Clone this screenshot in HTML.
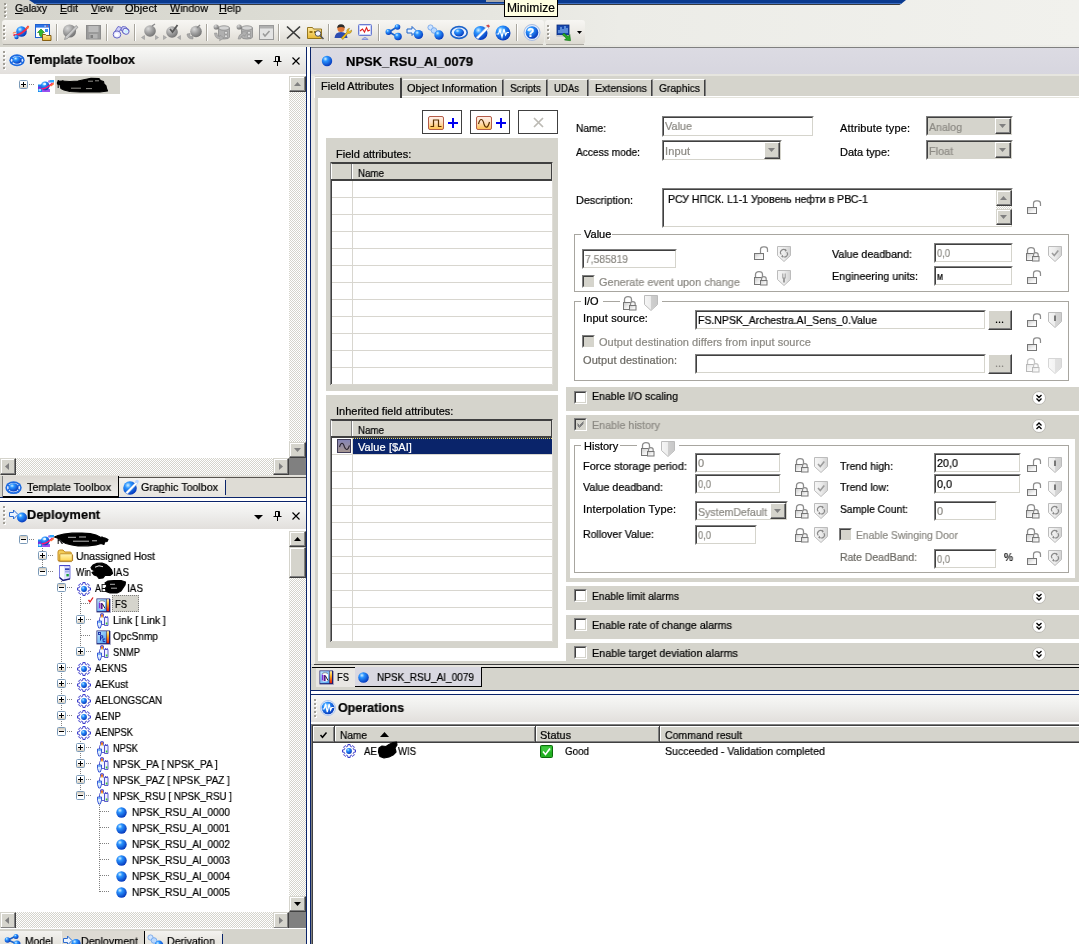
<!DOCTYPE html>
<html><head><meta charset="utf-8"><title>ArchestrA IDE</title>
<style>
html,body{margin:0;padding:0}
body{width:1079px;height:944px;overflow:hidden;position:relative;background:#d5d4cc;font-family:"Liberation Sans",sans-serif;font-size:11px;line-height:13px;color:#000}
.a{position:absolute;box-sizing:border-box}
.t{position:absolute;white-space:nowrap;line-height:13px}
svg{overflow:visible}
.hatch{background-color:#fff;background-image:linear-gradient(45deg,#d5d4cc 25%,transparent 25%,transparent 75%,#d5d4cc 75%),linear-gradient(45deg,#d5d4cc 25%,transparent 25%,transparent 75%,#d5d4cc 75%);background-size:2px 2px;background-position:0 0,1px 1px}
.btn3d{background:#d5d4cc;border:1px solid;border-color:#fff #404040 #404040 #fff;box-shadow:inset -1px -1px 0 #808080,inset 1px 1px 0 #d5d4cc}
.sunk{border:1px solid;border-color:#808080 #fff #fff #808080;box-shadow:inset 1px 1px 0 #404040,inset -1px -1px 0 #d5d4cc;background:#fff}
u{text-decoration:underline}

#root{position:absolute;left:0;top:0;width:1079px;height:944px;overflow:hidden}
.t{will-change:transform;-webkit-text-stroke:0.22px}
.sbtn{background:#d5d4cc;border:1px solid;border-color:#d5d4cc #404040 #404040 #d5d4cc;box-shadow:inset -1px -1px 0 #808080,inset 1px 1px 0 #fff}

</style></head>
<body>
<div id="root">
<svg width="0" height="0" style="position:absolute"><defs>
<radialGradient id="gBlue" cx="35%" cy="30%" r="75%"><stop offset="0" stop-color="#d4f2ff"/><stop offset="0.3" stop-color="#2a94ff"/><stop offset="1" stop-color="#0434b8"/></radialGradient>
<radialGradient id="gGray" cx="35%" cy="30%" r="75%"><stop offset="0" stop-color="#d8d8d8"/><stop offset="0.5" stop-color="#a0a0a0"/><stop offset="1" stop-color="#707070"/></radialGradient>
<linearGradient id="gFold" x1="0" y1="0" x2="0" y2="1"><stop offset="0" stop-color="#ffe9a0"/><stop offset="1" stop-color="#e8b830"/></linearGradient>
<linearGradient id="gOr" x1="0" y1="0" x2="0" y2="1"><stop offset="0" stop-color="#fff0ea"/><stop offset="0.45" stop-color="#ffe0c0"/><stop offset="1" stop-color="#ffc048"/></linearGradient>
<linearGradient id="gIcoB" x1="0" y1="0" x2="1" y2="1"><stop offset="0" stop-color="#c0e4ff"/><stop offset="1" stop-color="#4aa0f0"/></linearGradient>
<linearGradient id="gIcoR" x1="0" y1="0" x2="0" y2="1"><stop offset="0" stop-color="#fff0a0"/><stop offset="0.4" stop-color="#ffb020"/><stop offset="1" stop-color="#e01808"/></linearGradient>
<linearGradient id="gLk" x1="0" y1="0" x2="1" y2="1"><stop offset="0" stop-color="#c8c8c8"/><stop offset="0.6" stop-color="#f4f4f4"/><stop offset="1" stop-color="#fff"/></linearGradient>
<linearGradient id="gSh" x1="0" y1="0" x2="1" y2="0"><stop offset="0" stop-color="#f6f6f6"/><stop offset="0.5" stop-color="#ececec"/><stop offset="1" stop-color="#d2d2d2"/></linearGradient>
<linearGradient id="gFold2" x1="0" y1="0" x2="0" y2="1"><stop offset="0" stop-color="#fff6b8"/><stop offset="1" stop-color="#ffd450"/></linearGradient>
<linearGradient id="gPur" x1="0" y1="0" x2="0" y2="1"><stop offset="0" stop-color="#8484b8"/><stop offset="1" stop-color="#a89890"/></linearGradient>
</defs></svg>
<div class="a" style="left:0px;top:0px;width:1079px;height:47px;background:linear-gradient(90deg,#d5d4cc 0,#dbdbd3 250px,#ecece7 620px,#f1f1ed 1079px)"></div>
<div class="a" style="left:3px;top:44px;width:540px;height:1px;background:#adaba4"></div>
<div class="a" style="left:546px;top:44px;width:38px;height:1px;background:#adaba4"></div>
<div class="a" style="left:0px;top:45px;width:1079px;height:2px;background:linear-gradient(90deg,#d6d5cd 0,#dadad2 250px,#e7e7e1 620px,#ecece7 1079px)"></div>
<svg class="a" style="left:0px;top:0px" width="1079" height="6" viewBox="0 0 1079 6"><polygon points="29,0 906,0 901,3.9 35,3.9" fill="#0a3a8f"/><polygon points="34,3.1 902,3.1 901,4.1 35.5,4.1" fill="#3f6fc0"/><polygon points="35.5,4 901,4 899.5,5 37,5" fill="#3a3a3a"/></svg>
<div class="a" style="left:486px;top:0px;width:18px;height:2px;background:#a8a8a8"></div>
<div class="a" style="left:4px;top:3px;width:2px;height:2px;background:#9c9a92"></div>
<div class="a" style="left:5px;top:4px;width:2px;height:2px;background:#fff"></div>
<div class="a" style="left:4px;top:3px;width:2px;height:2px;background:#9c9a92"></div>
<div class="a" style="left:4px;top:7px;width:2px;height:2px;background:#9c9a92"></div>
<div class="a" style="left:5px;top:8px;width:2px;height:2px;background:#fff"></div>
<div class="a" style="left:4px;top:7px;width:2px;height:2px;background:#9c9a92"></div>
<div class="a" style="left:4px;top:11px;width:2px;height:2px;background:#9c9a92"></div>
<div class="a" style="left:5px;top:12px;width:2px;height:2px;background:#fff"></div>
<div class="a" style="left:4px;top:11px;width:2px;height:2px;background:#9c9a92"></div>
<div class="a" style="left:4px;top:15px;width:2px;height:2px;background:#9c9a92"></div>
<div class="a" style="left:5px;top:16px;width:2px;height:2px;background:#fff"></div>
<div class="a" style="left:4px;top:15px;width:2px;height:2px;background:#9c9a92"></div>
<span class="t" style="left:15px;top:2px;transform:scaleX(0.9343);transform-origin:0 0;"><u>G</u>alaxy</span>
<span class="t" style="left:60px;top:2px;transform:scaleX(0.9489);transform-origin:0 0;"><u>E</u>dit</span>
<span class="t" style="left:91px;top:2px;transform:scaleX(0.9306);transform-origin:0 0;"><u>V</u>iew</span>
<span class="t" style="left:125px;top:2px;letter-spacing:0.04px;"><u>O</u>bject</span>
<span class="t" style="left:170px;top:2px;transform:scaleX(0.9712);transform-origin:0 0;"><u>W</u>indow</span>
<span class="t" style="left:219px;top:2px;transform:scaleX(0.9724);transform-origin:0 0;"><u>H</u>elp</span>
<div class="a" style="left:504px;top:-1px;width:54px;height:18px;background:#ffffe1;border:1px solid #000"></div>
<span class="t" style="left:507px;top:1px;font-size:12px;line-height:14px;letter-spacing:0.09px;">Minimize</span>
<div class="a" style="left:2px;top:20px;width:542px;height:24px;background:linear-gradient(180deg,#f7f6f3 0,#eeece7 45%,#dcd9d1 100%);border-radius:3px 3px 3px 3px;"></div>
<div class="a" style="left:545px;top:20px;width:40px;height:24px;background:linear-gradient(180deg,#f7f6f3 0,#eeece7 45%,#dcd9d1 100%);border-radius:3px 3px 3px 3px;"></div>
<div class="a" style="left:4px;top:26px;width:2px;height:2px;background:#fff"></div>
<div class="a" style="left:3px;top:25px;width:2px;height:2px;background:#a09d95"></div>
<div class="a" style="left:4px;top:30px;width:2px;height:2px;background:#fff"></div>
<div class="a" style="left:3px;top:29px;width:2px;height:2px;background:#a09d95"></div>
<div class="a" style="left:4px;top:34px;width:2px;height:2px;background:#fff"></div>
<div class="a" style="left:3px;top:33px;width:2px;height:2px;background:#a09d95"></div>
<div class="a" style="left:4px;top:38px;width:2px;height:2px;background:#fff"></div>
<div class="a" style="left:3px;top:37px;width:2px;height:2px;background:#a09d95"></div>
<div class="a" style="left:548px;top:26px;width:2px;height:2px;background:#fff"></div>
<div class="a" style="left:547px;top:25px;width:2px;height:2px;background:#a09d95"></div>
<div class="a" style="left:548px;top:30px;width:2px;height:2px;background:#fff"></div>
<div class="a" style="left:547px;top:29px;width:2px;height:2px;background:#a09d95"></div>
<div class="a" style="left:548px;top:34px;width:2px;height:2px;background:#fff"></div>
<div class="a" style="left:547px;top:33px;width:2px;height:2px;background:#a09d95"></div>
<div class="a" style="left:548px;top:38px;width:2px;height:2px;background:#fff"></div>
<div class="a" style="left:547px;top:37px;width:2px;height:2px;background:#a09d95"></div>
<div class="a" style="left:56px;top:24px;width:1px;height:17px;background:#a8a59d"></div>
<div class="a" style="left:57px;top:24px;width:1px;height:17px;background:#fff"></div>
<div class="a" style="left:106px;top:24px;width:1px;height:17px;background:#a8a59d"></div>
<div class="a" style="left:107px;top:24px;width:1px;height:17px;background:#fff"></div>
<div class="a" style="left:134px;top:24px;width:1px;height:17px;background:#a8a59d"></div>
<div class="a" style="left:135px;top:24px;width:1px;height:17px;background:#fff"></div>
<div class="a" style="left:206px;top:24px;width:1px;height:17px;background:#a8a59d"></div>
<div class="a" style="left:207px;top:24px;width:1px;height:17px;background:#fff"></div>
<div class="a" style="left:278px;top:24px;width:1px;height:17px;background:#a8a59d"></div>
<div class="a" style="left:279px;top:24px;width:1px;height:17px;background:#fff"></div>
<div class="a" style="left:328px;top:24px;width:1px;height:17px;background:#a8a59d"></div>
<div class="a" style="left:329px;top:24px;width:1px;height:17px;background:#fff"></div>
<div class="a" style="left:378px;top:24px;width:1px;height:17px;background:#a8a59d"></div>
<div class="a" style="left:379px;top:24px;width:1px;height:17px;background:#fff"></div>
<div class="a" style="left:516px;top:24px;width:1px;height:17px;background:#a8a59d"></div>
<div class="a" style="left:517px;top:24px;width:1px;height:17px;background:#fff"></div>
<svg class="a" style="left:12px;top:24px" width="18" height="16" viewBox="0 0 18 16"><circle cx="9.5" cy="7.5" r="5.3" fill="url(#gBlue)"/><path d="M1.500,11 C6,12 13,8 16.500,2" stroke="#f02850" stroke-width="1.800" fill="none"/><path d="M13,5 L17,1.500 L16.500,4.500z" fill="#ff7030"/><path d="M4.800,9.300 A5.300,5.300 0 0 1 14.300,5.200" stroke="url(#gBlue)" stroke-width="0" fill="none"/><circle cx="4.500" cy="13" r="2.200" fill="url(#gBlue)"/><path d="M1,9.500 q1,-1.500 3,-1" stroke="#ff9060" stroke-width="1.200" fill="none"/></svg>
<svg class="a" style="left:35px;top:24px" width="17" height="17" viewBox="0 0 17 17"><rect x="0.500" y="0.500" width="14" height="13" fill="#fff" stroke="#2060d0"/><rect x="1" y="1" width="13" height="2.600" fill="#2c74e8"/><rect x="9.500" y="1.500" width="1.200" height="1.200" fill="#fff"/><rect x="11.700" y="1.500" width="1.200" height="1.200" fill="#ff5030"/><rect x="10" y="5" width="3" height="3" fill="#3c8cf0"/><path d="M2.500,8.500 l3.500,-3.500 l3.500,3.500 h-2 q0,3.500 2,4 h-4 q-1.500,-1 -1,-4z" fill="#30b830" stroke="#0c7a0c" stroke-width=".6"/><path d="M7.500,10.500 h3 l1,1 h4.500 v5 h-8.500z" fill="url(#gFold)" stroke="#7a5408" stroke-width=".9"/></svg>
<svg class="a" style="left:62px;top:24px" width="18" height="17" viewBox="0 0 18 17"><circle cx="7.5" cy="7" r="6.6" fill="url(#gGray)"/><path d="M2.500,15.500 L3.500,12.500 L14,1.500 l2,1.700 L5.500,14.500z" fill="#c8c8c8" stroke="#8a8a8a" stroke-width=".7"/></svg>
<svg class="a" style="left:86px;top:25px" width="15" height="15" viewBox="0 0 15 15"><rect x="0.500" y="0.500" width="14" height="13.500" fill="#9a9a9a" stroke="#8c8c8c"/><rect x="2.500" y="1" width="10" height="6" fill="#bcbcbc"/><rect x="3.500" y="9" width="8" height="4.500" fill="#b4b4b4"/><rect x="4.500" y="10" width="2.500" height="3" fill="#808080"/></svg>
<svg class="a" style="left:112px;top:25px" width="18" height="14" viewBox="0 0 18 14"><path d="M2,8 L6,1.500 L9.500,2.500 L8,6 Z" fill="#d0d0f8" stroke="#6464c4" stroke-width=".9"/><path d="M9,5 L10.500,1.500 L14,2 L16.500,5.500 L12,8.500 Z" fill="#d8d8fc" stroke="#6464c4" stroke-width=".9"/><ellipse cx="5" cy="9.500" rx="3.800" ry="3.600" fill="#e8e8ff" stroke="#6464c4" stroke-width="1"/><ellipse cx="13.800" cy="6.300" rx="3.200" ry="2.800" fill="#e8f0ff" stroke="#6464c4" stroke-width="1" transform="rotate(25 13.800 6.300)"/><ellipse cx="4.800" cy="9.800" rx="1.800" ry="1.700" fill="#fff"/><ellipse cx="14.200" cy="6.500" rx="1.500" ry="1.300" fill="#c8f0ff"/></svg>
<svg class="a" style="left:141px;top:24px" width="18" height="17" viewBox="0 0 18 17"><circle cx="9" cy="7" r="5.8" fill="url(#gGray)"/><path d="M11,2 l3,-2" stroke="#888" stroke-width="1.4"/><path d="M0.5,13.5 l3,-2 v4z M17.5,13.5 l-3,-2 v4z" fill="#b0b0b0" stroke="#909090" stroke-width=".5"/></svg>
<svg class="a" style="left:163px;top:24px" width="18" height="17" viewBox="0 0 18 17"><circle cx="9" cy="8" r="5.8" fill="url(#gGray)"/><path d="M7,5 l2.5,3 l5,-7" stroke="#585858" stroke-width="1.8" fill="none"/><path d="M3.5,13.5 l-3,-2 v4z M14.500,13.5 l3,-2 v4z" fill="#b0b0b0" stroke="#909090" stroke-width=".5"/></svg>
<svg class="a" style="left:186px;top:24px" width="18" height="17" viewBox="0 0 18 17"><circle cx="10" cy="7.5" r="5.8" fill="url(#gGray)"/><path d="M14,1 l-3,3" stroke="#888" stroke-width="1.4"/><path d="M1,10 q0,5 6,5 l0,-2.5 l-2.5,0 q-1,-1 -0.5,-3z" fill="#a8a8a8" stroke="#888" stroke-width=".5"/></svg>
<svg class="a" style="left:213px;top:24px" width="18" height="17" viewBox="0 0 18 17"><path d="M5.500,4 v9 q0,2 5.500,2 q5.500,0 5.500,-2 v-9z" fill="#b0b0b0" stroke="#8a8a8a" stroke-width=".8"/><ellipse cx="11" cy="4" rx="5.500" ry="2.200" fill="#d4d4d4" stroke="#8a8a8a" stroke-width=".8"/><path d="M11.500,7.500 h3 v2.500 h-3z M11.500,11 h3 v2.500 h-3z" fill="#dcdcdc" stroke="#8a8a8a" stroke-width=".6"/><circle cx="3.200" cy="3" r="2.600" fill="url(#gGray)"/><path d="M1.500,9 q0,5.500 5.500,6 l-0.500,1.800 l4.500,-2.800 l-4,-3 l-0.300,1.800 q-2.800,-0.500 -2.800,-3.800z" fill="#b0b0b0" stroke="#8c8c8c" stroke-width=".5"/></svg>
<svg class="a" style="left:236px;top:24px" width="18" height="17" viewBox="0 0 18 17"><path d="M5.500,4 v9 q0,2 5.500,2 q5.500,0 5.500,-2 v-9z" fill="#b0b0b0" stroke="#8a8a8a" stroke-width=".8"/><ellipse cx="11" cy="4" rx="5.500" ry="2.200" fill="#d4d4d4" stroke="#8a8a8a" stroke-width=".8"/><path d="M11.500,7.500 h3 v2.500 h-3z M11.500,11 h3 v2.500 h-3z" fill="#dcdcdc" stroke="#8a8a8a" stroke-width=".6"/><circle cx="3.200" cy="3" r="2.600" fill="url(#gGray)"/><path d="M2,15 q0.500,-5 5,-6 l-0.800,-1.600 l5,0.800 l-2.500,4.200 l-0.700,-1.500 q-3,1 -3.500,4.100z" fill="#b0b0b0" stroke="#8c8c8c" stroke-width=".5"/></svg>
<svg class="a" style="left:259px;top:25px" width="14" height="14" viewBox="0 0 14 14"><rect x="0.5" y="0.5" width="14" height="14" fill="#e4e4e4" stroke="#9a9a9a"/><rect x="1" y="1" width="13" height="2.5" fill="#b0b0b0"/><path d="M4,8.5 l2,2.500 l4.500,-5" stroke="#9a9a9a" stroke-width="1.5" fill="none"/></svg>
<svg class="a" style="left:286px;top:26px" width="15" height="13" viewBox="0 0 15 13"><path d="M1,0.5 L14,12.5 M14,0.5 L1,12.5" stroke="#3a3a3a" stroke-width="1.7"/></svg>
<svg class="a" style="left:307px;top:25px" width="18" height="15" viewBox="0 0 18 15"><path d="M0.5,2.5 h5 l1,1.500 h8 v9.500 h-14z" fill="url(#gFold)" stroke="#8a6a10" stroke-width=".9"/><rect x="2.5" y="6" width="3" height="2" fill="#9a7410"/><rect x="7" y="6" width="3" height="2" fill="#9a7410"/><circle cx="11" cy="8.500" r="2.800" fill="#f4f4ff" stroke="#555" stroke-width="1"/><path d="M13,10.500 l3.500,3.500" stroke="#555" stroke-width="1.600"/></svg>
<svg class="a" style="left:334px;top:24px" width="19" height="17" viewBox="0 0 19 17"><circle cx="7" cy="4.500" r="3.600" fill="#e07838"/><path d="M3.200,4 a3.800,3.800 0 0 1 7.600,0 q-3.500,-2 -7.600,0z" fill="#2a2a2a"/><path d="M0.500,14 q0.500,-6 6.500,-6 q6,0 6.500,6z" fill="#2c4cb0"/><path d="M17.500,6 a2.600,2.600 0 0 1 -3.500,3.200 L9,15.500 l-1.800,-1.500 L13,8 a2.600,2.600 0 0 1 2.600,-3.600 l-1.200,1.800 l1.400,1.200z" fill="#f0c020" stroke="#8a6a10" stroke-width=".5"/></svg>
<svg class="a" style="left:357px;top:24px" width="17" height="17" viewBox="0 0 17 17"><rect x="1.500" y="0.500" width="13" height="11" rx="1" fill="#c8d4f8" stroke="#6a7ad0"/><rect x="3" y="2" width="10" height="8" fill="#fff"/><path d="M3,7 l2.500,-2 l2,3 l2,-4.500 l1.500,3.500 l2,-1" stroke="#e02020" stroke-width="1.100" fill="none"/><path d="M5,15.500 q3,-4 6,0z" fill="#b8c4f0" stroke="#6a7ad0" stroke-width=".7"/></svg>
<svg class="a" style="left:385px;top:24px" width="18" height="17" viewBox="0 0 18 17"><path d="M4,8 L12,3 M4,8 L13,13" stroke="#1c62c8" stroke-width="1.800"/><circle cx="3.5" cy="8" r="3" fill="url(#gBlue)"/><circle cx="12.5" cy="3" r="2.8" fill="url(#gBlue)"/><circle cx="13" cy="12.5" r="3.8" fill="url(#gBlue)"/></svg>
<svg class="a" style="left:406px;top:25px" width="18" height="15" viewBox="0 0 18 15"><path d="M1,4 h5 v-2.500 l4.500,4.500 l-4.500,4.500 v-2.500 h-5z" fill="#e8f2ff" stroke="#1c62c8" stroke-width="1"/><circle cx="12.5" cy="9.5" r="4.6" fill="url(#gBlue)"/></svg>
<svg class="a" style="left:427px;top:24px" width="18" height="17" viewBox="0 0 18 17"><circle cx="3.500" cy="3.500" r="2.600" fill="#cfe4ff" stroke="#6aa0e8" stroke-width=".8"/><circle cx="7" cy="6.500" r="2.800" fill="#b8d8ff" stroke="#6aa0e8" stroke-width=".8"/><circle cx="12" cy="11" r="4.7" fill="url(#gBlue)"/></svg>
<svg class="a" style="left:449px;top:25px" width="20" height="15" viewBox="0 0 20 15"><ellipse cx="10" cy="7.500" rx="9" ry="6.800" fill="#1c62c8"/><ellipse cx="10" cy="7.500" rx="7.400" ry="5" fill="#e8f0ff"/><ellipse cx="10" cy="7.500" rx="5" ry="4" fill="url(#gBlue)"/></svg>
<svg class="a" style="left:472px;top:24px" width="19" height="17" viewBox="0 0 19 17"><circle cx="8.5" cy="9" r="7" fill="url(#gBlue)"/><path d="M4,13.500 L15,2.500 l1.800,1.800 L6,15z" fill="#fff" stroke="#8ab0e8" stroke-width=".6"/><path d="M14,1.500 l2.500,-1 l1.500,1.800 l-1.500,1.500z" fill="#d04848"/></svg>
<svg class="a" style="left:494px;top:24px" width="18" height="17" viewBox="0 0 18 17"><circle cx="9" cy="9" r="7.5" fill="url(#gBlue)"/><path d="M2.500,10 l2,-0 l1.500,-4 l2,7 l2,-8 l1.500,6 l1.500,-2.500 h2" stroke="#fff" stroke-width="1.200" fill="none"/></svg>
<svg class="a" style="left:523px;top:24px" width="18" height="17" viewBox="0 0 18 17"><circle cx="9" cy="8.500" r="8" fill="#e4ecfa" stroke="#a8bce0" stroke-width="1"/><circle cx="9" cy="8.5" r="6.3" fill="url(#gBlue)"/></svg>
<span class="t" style="left:526.5px;top:26px;font-size:12px;line-height:14px;font-weight:bold;color:#fff;">?</span>
<svg class="a" style="left:556px;top:24px" width="19" height="18" viewBox="0 0 19 18"><rect x="1" y="1" width="12" height="10" fill="#1848b0" stroke="#0c2a78" stroke-width=".8"/><path d="M3,9 v-3 M5,9 v-6 M7,9 v-4 M9,9 v-7 M11,9 v-5" stroke="#9cd0ff" stroke-width="1"/><rect x="0.500" y="11" width="13" height="1.800" fill="#c8c8c8"/><path d="M8,9 l4,3.500 l1.800,-1.800 l0.700,6 l-6,-0.700 l1.800,-1.800 l-4,-3.500z" fill="#28a828" stroke="#0c6a0c" stroke-width=".6"/></svg>
<svg class="a" style="left:577px;top:31px" width="5" height="3" viewBox="0 0 5 3"><path d="M0,0 h5 l-2.500,3z" fill="#000"/></svg>
<div class="a" style="left:0px;top:47px;width:306px;height:27px;background:linear-gradient(180deg,#f8f8f6 0,#efefed 40%,#e2dfdc 100%);"></div>
<div class="a" style="left:4px;top:52px;width:2px;height:2px;background:#fff"></div>
<div class="a" style="left:3px;top:51px;width:2px;height:2px;background:#a29f97"></div>
<div class="a" style="left:4px;top:56px;width:2px;height:2px;background:#fff"></div>
<div class="a" style="left:3px;top:55px;width:2px;height:2px;background:#a29f97"></div>
<div class="a" style="left:4px;top:60px;width:2px;height:2px;background:#fff"></div>
<div class="a" style="left:3px;top:59px;width:2px;height:2px;background:#a29f97"></div>
<div class="a" style="left:4px;top:64px;width:2px;height:2px;background:#fff"></div>
<div class="a" style="left:3px;top:63px;width:2px;height:2px;background:#a29f97"></div>
<div class="a" style="left:4px;top:68px;width:2px;height:2px;background:#fff"></div>
<div class="a" style="left:3px;top:67px;width:2px;height:2px;background:#a29f97"></div>
<svg class="a" style="left:9px;top:54px" width="16.02" height="12.46" viewBox="0 0 18 14"><ellipse cx="9" cy="7" rx="8.600" ry="6.700" fill="#1c6ae0"/><ellipse cx="9" cy="7" rx="7" ry="4.800" fill="#dfeaff"/><ellipse cx="9" cy="6.800" rx="5.200" ry="4.300" fill="url(#gBlue)"/><path d="M2,3.500 l2.500,2 M16,3.500 l-2.500,2 M2,10.500 l2.500,-2 M16,10.500 l-2.500,-2" stroke="#1c6ae0" stroke-width="1.600"/></svg>
<span class="t" style="left:27px;top:52px;font-size:13px;line-height:15px;font-weight:bold;transform:scaleX(0.9883);transform-origin:0 0;">Template Toolbox</span>
<svg class="a" style="left:254px;top:60px" width="9" height="5" viewBox="0 0 9 5"><path d="M0,0 h9 l-4.5,4.5z" fill="#000"/></svg>
<svg class="a" style="left:273px;top:56px" width="9" height="10" viewBox="0 0 9 10"><path d="M2.500,0.500 h4 v4.500 M2.500,0.500 v4.500 M5.500,0.500 v4.500 M0.500,5.500 h8 M4.500,5.500 v4.500" stroke="#000" stroke-width="1" fill="none"/></svg>
<svg class="a" style="left:292px;top:57px" width="9" height="8" viewBox="0 0 9 8"><path d="M0.500,0.500 L7.500,7.500 M7.500,0.500 L0.500,7.500" stroke="#000" stroke-width="1.150"/></svg>
<div class="a" style="left:0px;top:74px;width:306px;height:384px;background:#fff"></div>
<div class="a" style="left:19px;top:80px;width:9px;height:9px;border:1px solid #7b9ab8;background:linear-gradient(180deg,#fff 0,#fff 40%,#d6cebf 100%);border-radius:1.5px"></div>
<div class="a" style="left:21px;top:84px;width:5px;height:1px;background:#000"></div>
<div class="a" style="left:23px;top:82px;width:1px;height:5px;background:#000"></div>
<div class="a" style="left:29px;top:84px;width:5px;height:1px;background-image:linear-gradient(90deg,#808080 50%,transparent 50%);background-size:2px 1px"></div>
<svg class="a" style="left:38px;top:80px" width="16" height="12" viewBox="0 0 16 12"><rect x="0" y="4.500" width="4" height="7.500" fill="#1488f0"/><rect x="0" y="6.500" width="3" height="2.500" fill="#7030e0"/><circle cx="1.800" cy="10" r="1.300" fill="#a8e0ff"/><rect x="11.500" y="0" width="4.500" height="2.500" fill="#30a8ff"/><rect x="10" y="0.500" width="2" height="2" fill="#8a50f0" opacity=".7"/><rect x="4" y="9" width="8" height="3" fill="#9a50f0"/><circle cx="7.200" cy="5.800" r="4.400" fill="url(#gBlue)"/><circle cx="6.800" cy="4" r="1.300" fill="#e8f8ff"/><path d="M3.500,8.800 C7,9 11,6.500 14.500,3" stroke="#ff1478" stroke-width="1.500" fill="none"/><path d="M12,5.500 L15.800,2 L15.800,4.500 L13,6.500z" fill="#ff7038"/></svg>
<div class="a" style="left:55px;top:76px;width:65px;height:18px;background:#d5d4cc"></div>
<span class="t" style="left:57px;top:78px;transform:scaleX(0.8819);transform-origin:0 0;">N</span>
<svg class="a" style="left:0;top:0" width="1079" height="944" viewBox="0 0 1079 944"><path d="M57.5,82 L61,81 L70,81.5 L78,81 L85,79.5 L91,78.3 L99,78.5 L100.5,80.5 L103.5,81.5 L104,84 L106,86 L106.5,88.5 L107.5,91 L100,92 L80,92 L70,91.5 L64,90 L61,88.5 L60,84.5 L57.5,84 Z" fill="#000" stroke="#000" stroke-width="1.2" stroke-linejoin="round"/><path d="M71,88.2 h10 M86,88.6 h6 M95,80.8 h4 M88,81.2 h5" stroke="#b8b5ad" stroke-width=".8"/></svg>
<div class="a hatch" style="left:289px;top:76px;width:17px;height:382px"></div>
<div class="a sbtn" style="left:289px;top:76px;width:17px;height:16px"></div>
<svg class="a" style="left:294px;top:82px" width="7" height="4" viewBox="0 0 7 4"><path d="M0,4 h7 l-3.500,-4z" fill="#808080"/></svg>
<div class="a sbtn" style="left:289px;top:442px;width:17px;height:16px"></div>
<svg class="a" style="left:294px;top:448px" width="7" height="4" viewBox="0 0 7 4"><path d="M0,0 h7 l-3.500,4z" fill="#808080"/></svg>
<div class="a hatch" style="left:0px;top:458px;width:289px;height:17px"></div>
<div class="a sbtn" style="left:0px;top:458px;width:16px;height:17px"></div>
<svg class="a" style="left:5px;top:463px" width="4" height="7" viewBox="0 0 4 7"><path d="M4,0 v7 l-4,-3.500z" fill="#808080"/></svg>
<div class="a sbtn" style="left:273px;top:458px;width:16px;height:17px"></div>
<svg class="a" style="left:279px;top:463px" width="4" height="7" viewBox="0 0 4 7"><path d="M0,0 v7 l4,-3.500z" fill="#808080"/></svg>
<div class="a" style="left:289px;top:458px;width:17px;height:17px;background:#808080"></div>
<div class="a" style="left:0px;top:475px;width:306px;height:22px;background:#dedcd5"></div>
<div class="a" style="left:0px;top:475px;width:306px;height:1px;background:#e4e2dc"></div>
<div class="a" style="left:0px;top:477px;width:306px;height:1px;background:#55534e"></div>
<div class="a" style="left:0px;top:476px;width:3px;height:21px;background:#d5d4cc;border-right:1px solid #808080"></div>
<div class="a" style="left:3px;top:476px;width:116px;height:22px;background:linear-gradient(180deg,#dcd9d3,#efeeeb);border-right:1px solid #000;border-bottom:2px solid #000"></div>
<svg class="a" style="left:5px;top:481px" width="17.1" height="13.3" viewBox="0 0 18 14"><ellipse cx="9" cy="7" rx="8.600" ry="6.700" fill="#1c6ae0"/><ellipse cx="9" cy="7" rx="7" ry="4.800" fill="#dfeaff"/><ellipse cx="9" cy="6.800" rx="5.200" ry="4.300" fill="url(#gBlue)"/><path d="M2,3.500 l2.500,2 M16,3.500 l-2.500,2 M2,10.500 l2.500,-2 M16,10.500 l-2.500,-2" stroke="#1c6ae0" stroke-width="1.600"/></svg>
<span class="t" style="left:27px;top:481px;transform:scaleX(0.9830);transform-origin:0 0;"><u>T</u>emplate Toolbox</span>
<div class="a" style="left:119px;top:478px;width:106px;height:19px;background:linear-gradient(180deg,#f4f3f0,#e6e4de)"></div>
<svg class="a" style="left:122px;top:479px" width="17" height="17" viewBox="0 0 17 17"><circle cx="8" cy="9" r="6.8" fill="url(#gBlue)"/><path d="M3.500,13.500 L14,3 l1.600,1.600 L5.500,15z" fill="#fff" stroke="#8ab0e8" stroke-width=".5"/><circle cx="15" cy="2.500" r="1.800" fill="#bcd6ff"/></svg>
<span class="t" style="left:141px;top:481px;transform:scaleX(0.9707);transform-origin:0 0;">Gra<u>p</u>hic Toolbox</span>
<div class="a" style="left:225px;top:480px;width:1px;height:15px;background:#0a246a"></div>
<div class="a" style="left:0px;top:497px;width:306px;height:1px;background:#0a246a"></div>
<div class="a" style="left:3px;top:497px;width:116px;height:1px;background:#000"></div>
<div class="a" style="left:0px;top:498px;width:306px;height:3px;background:#fff"></div>
<div class="a" style="left:0px;top:501px;width:306px;height:1px;background:#0a246a"></div>
<div class="a" style="left:0px;top:502px;width:306px;height:1px;background:#fff"></div>
<div class="a" style="left:0px;top:503px;width:306px;height:26px;background:linear-gradient(180deg,#f8f8f6 0,#efefed 40%,#e2dfdc 100%);"></div>
<div class="a" style="left:4px;top:507px;width:2px;height:2px;background:#fff"></div>
<div class="a" style="left:3px;top:506px;width:2px;height:2px;background:#a29f97"></div>
<div class="a" style="left:4px;top:511px;width:2px;height:2px;background:#fff"></div>
<div class="a" style="left:3px;top:510px;width:2px;height:2px;background:#a29f97"></div>
<div class="a" style="left:4px;top:515px;width:2px;height:2px;background:#fff"></div>
<div class="a" style="left:3px;top:514px;width:2px;height:2px;background:#a29f97"></div>
<div class="a" style="left:4px;top:519px;width:2px;height:2px;background:#fff"></div>
<div class="a" style="left:3px;top:518px;width:2px;height:2px;background:#a29f97"></div>
<div class="a" style="left:4px;top:523px;width:2px;height:2px;background:#fff"></div>
<div class="a" style="left:3px;top:522px;width:2px;height:2px;background:#a29f97"></div>

<span class="t" style="left:27px;top:507px;font-size:13px;line-height:15px;font-weight:bold;transform:scaleX(0.9811);transform-origin:0 0;">Deployment</span>
<svg class="a" style="left:254px;top:515px" width="9" height="5" viewBox="0 0 9 5"><path d="M0,0 h9 l-4.5,4.5z" fill="#000"/></svg>
<svg class="a" style="left:273px;top:511px" width="9" height="10" viewBox="0 0 9 10"><path d="M2.500,0.500 h4 v4.500 M2.500,0.500 v4.500 M5.500,0.500 v4.500 M0.500,5.500 h8 M4.500,5.500 v4.500" stroke="#000" stroke-width="1" fill="none"/></svg>
<svg class="a" style="left:292px;top:512px" width="9" height="8" viewBox="0 0 9 8"><path d="M0.500,0.500 L7.500,7.500 M7.500,0.500 L0.500,7.500" stroke="#000" stroke-width="1.150"/></svg>
<svg class="a" style="left:9px;top:508.5px" width="20" height="14" viewBox="0 0 20 14"><path d="M0.500,3.500 h4 v-2.500 l4.500,4.500 l-4.500,4.500 v-2.500 h-4z" fill="#eaf3ff" stroke="#2c6cd0" stroke-width="1"/><circle cx="13" cy="8.5" r="5" fill="url(#gBlue)"/></svg>
<div class="a" style="left:0px;top:529px;width:306px;height:383px;background:#fff"></div>
<div class="a" style="left:42px;top:548px;width:1px;height:25px;background-image:linear-gradient(180deg,#808080 50%,transparent 50%);background-size:1px 2px"></div>
<div class="a" style="left:61px;top:581px;width:1px;height:152px;background-image:linear-gradient(180deg,#808080 50%,transparent 50%);background-size:1px 2px"></div>
<div class="a" style="left:80px;top:597px;width:1px;height:56px;background-image:linear-gradient(180deg,#808080 50%,transparent 50%);background-size:1px 2px"></div>
<div class="a" style="left:80px;top:741px;width:1px;height:56px;background-image:linear-gradient(180deg,#808080 50%,transparent 50%);background-size:1px 2px"></div>
<div class="a" style="left:99px;top:805px;width:1px;height:88px;background-image:linear-gradient(180deg,#808080 50%,transparent 50%);background-size:1px 2px"></div>
<div class="a" style="left:19px;top:535px;width:9px;height:9px;border:1px solid #7b9ab8;background:linear-gradient(180deg,#d0c8b8 0,#fff 60%,#fff 100%);border-radius:1.5px"></div>
<div class="a" style="left:21px;top:539px;width:5px;height:1px;background:#000"></div>
<div class="a" style="left:29px;top:539px;width:5px;height:1px;background-image:linear-gradient(90deg,#808080 50%,transparent 50%);background-size:2px 1px"></div>
<svg class="a" style="left:38px;top:535px" width="16" height="12" viewBox="0 0 16 12"><rect x="0" y="4.500" width="4" height="7.500" fill="#1488f0"/><rect x="0" y="6.500" width="3" height="2.500" fill="#7030e0"/><circle cx="1.800" cy="10" r="1.300" fill="#a8e0ff"/><rect x="11.500" y="0" width="4.500" height="2.500" fill="#30a8ff"/><rect x="10" y="0.500" width="2" height="2" fill="#8a50f0" opacity=".7"/><rect x="4" y="9" width="8" height="3" fill="#9a50f0"/><circle cx="7.200" cy="5.800" r="4.400" fill="url(#gBlue)"/><circle cx="6.800" cy="4" r="1.300" fill="#e8f8ff"/><path d="M3.500,8.800 C7,9 11,6.500 14.500,3" stroke="#ff1478" stroke-width="1.500" fill="none"/><path d="M12,5.500 L15.800,2 L15.800,4.500 L13,6.500z" fill="#ff7038"/></svg>
<span class="t" style="left:57px;top:534px;transform:scaleX(0.8170);transform-origin:0 0;">K</span>
<span class="t" style="left:101px;top:534px;transform:scaleX(0.6531);transform-origin:0 0;">I</span>
<svg class="a" style="left:0;top:0" width="1079" height="944" viewBox="0 0 1079 944"><path d="M54.5,537 L58,535.5 L64,534 L72,533.2 L82,533 L90,533.6 L96,535 L100,537 L105,538 L108,539.5 L107,541.5 L104.5,542 L104,544.5 L101,543.5 L96,545 L88,545.8 L78,546 L72,545 L66,543.5 L62,541.5 L60,539 Z" fill="#000" stroke="#000" stroke-width="1.2" stroke-linejoin="round"/><path d="M68,537.3 h8 M79,537 h7 M73,541.2 h16 M92,540.8 h5" stroke="#e8e8e8" stroke-width=".8"/></svg>
<div class="a" style="left:38px;top:551px;width:9px;height:9px;border:1px solid #7b9ab8;background:linear-gradient(180deg,#fff 0,#fff 40%,#d6cebf 100%);border-radius:1.5px"></div>
<div class="a" style="left:40px;top:555px;width:5px;height:1px;background:#000"></div>
<div class="a" style="left:42px;top:553px;width:1px;height:5px;background:#000"></div>
<div class="a" style="left:48px;top:555px;width:5px;height:1px;background-image:linear-gradient(90deg,#808080 50%,transparent 50%);background-size:2px 1px"></div>
<svg class="a" style="left:57px;top:549px" width="16" height="13" viewBox="0 0 16 13"><path d="M1,3 Q1,1 3,1 H6 L7.800,3 H13 Q14.500,3 14.500,4.500 V11.500 H1 Z" fill="#f2cc58" stroke="#c48c24" stroke-width="1"/><path d="M2.800,5.500 Q2.800,4.800 3.600,4.800 H14.600 Q15.300,4.800 15.300,5.600 V11.300 Q15.300,12 14.500,12 H3.500 Q2.800,12 2.800,11.300 Z" fill="url(#gFold2)" stroke="#c08a20" stroke-width=".9"/><path d="M1.500,12.600 H14.800 M15.600,6 V12" stroke="#a06c10" stroke-width=".9" opacity=".8"/></svg>
<span class="t" style="left:76px;top:550px;transform:scaleX(0.9426);transform-origin:0 0;">Unassigned Host</span>
<div class="a" style="left:38px;top:567px;width:9px;height:9px;border:1px solid #7b9ab8;background:linear-gradient(180deg,#d0c8b8 0,#fff 60%,#fff 100%);border-radius:1.5px"></div>
<div class="a" style="left:40px;top:571px;width:5px;height:1px;background:#000"></div>
<div class="a" style="left:48px;top:571px;width:5px;height:1px;background-image:linear-gradient(90deg,#808080 50%,transparent 50%);background-size:2px 1px"></div>
<svg class="a" style="left:59px;top:565px" width="12" height="16" viewBox="0 0 12 16"><path d="M0.500,0.600 H11 V13.800 L4,15.500 L0.500,12.500 Z" fill="#dfe2ff" stroke="#6c6cdc" stroke-width=".9"/><path d="M1,1.100 H5 V14.600 L1,12.200 Z" fill="#fbfbff"/><rect x="6" y="3.300" width="4.500" height="1.800" fill="#3444b4"/><rect x="6" y="5.800" width="4.500" height="1" fill="#8c98e4"/><rect x="6" y="7.300" width="4.500" height=".8" fill="#b0b8f0"/><rect x="7.400" y="9" width="2.400" height="2.400" fill="#18a038"/><path d="M0.500,12.500 L4,15.500 L11,13.900" stroke="#1c1c78" stroke-width="1.400" fill="none"/><path d="M0.500,0.600 H11" stroke="#4040c8" stroke-width="1"/></svg>
<span class="t" style="left:76px;top:566px;transform:scaleX(0.7921);transform-origin:0 0;">Win</span>
<span class="t" style="left:113px;top:566px;transform:scaleX(0.9014);transform-origin:0 0;">IAS</span>
<svg class="a" style="left:0;top:0" width="1079" height="944" viewBox="0 0 1079 944"><path d="M91,567.5 L93,565 L97,563.4 L102,563 L106,564.5 L109,567 L111.5,570 L112.5,573.5 L110,575.5 L105,575.5 L103,578 L99,578.5 L97,576 L94,575 L92,572.5 L95,571 L92,569.5 Z" fill="#000" stroke="#000" stroke-width="1.2" stroke-linejoin="round"/><path d="M95,567.2 q4,-2.500 8,-0.500" stroke="#fff" stroke-width=".9" fill="none"/></svg>
<div class="a" style="left:57px;top:583px;width:9px;height:9px;border:1px solid #7b9ab8;background:linear-gradient(180deg,#d0c8b8 0,#fff 60%,#fff 100%);border-radius:1.5px"></div>
<div class="a" style="left:59px;top:587px;width:5px;height:1px;background:#000"></div>
<div class="a" style="left:67px;top:587px;width:5px;height:1px;background-image:linear-gradient(90deg,#808080 50%,transparent 50%);background-size:2px 1px"></div>
<svg class="a" style="left:77px;top:582px" width="14" height="14" viewBox="0 0 14 14"><path d="M5.87,0.50 L8.13,0.50 L8.17,2.14 L9.61,2.74 L10.80,1.60 L12.40,3.20 L11.26,4.39 L11.86,5.83 L13.50,5.87 L13.50,8.13 L11.86,8.17 L11.26,9.61 L12.40,10.80 L10.80,12.40 L9.61,11.26 L8.17,11.86 L8.13,13.50 L5.87,13.50 L5.83,11.86 L4.39,11.26 L3.20,12.40 L1.60,10.80 L2.74,9.61 L2.14,8.17 L0.50,8.13 L0.50,5.87 L2.14,5.83 L2.74,4.39 L1.60,3.20 L3.20,1.60 L4.39,2.74 L5.83,2.14Z" fill="#fff" stroke="#2222c4" stroke-width="0.85" stroke-linejoin="miter"/><circle cx="7" cy="7" r="2.900" fill="url(#gBlue)"/></svg>
<span class="t" style="left:95px;top:582px;transform:scaleX(0.8170);transform-origin:0 0;">AE</span>
<span class="t" style="left:127px;top:582px;transform:scaleX(0.9014);transform-origin:0 0;">IAS</span>
<svg class="a" style="left:0;top:0" width="1079" height="944" viewBox="0 0 1079 944"><path d="M105,583 L108,581 L114,580.5 L121,580.5 L125.5,582 L125,585 L123,588 L121,591 L117,593 L110,593 L106,591.5 L105.5,588 L107,586 Z" fill="#000" stroke="#000" stroke-width="1.2" stroke-linejoin="round"/><path d="M110,584.300 h5 M111,588.200 h6" stroke="#d8d8d8" stroke-width=".8"/></svg>
<div class="a" style="left:81px;top:603px;width:10px;height:1px;background-image:linear-gradient(90deg,#808080 50%,transparent 50%);background-size:2px 1px"></div>
<svg class="a" style="left:96px;top:598px" width="15" height="15" viewBox="0 0 15 15"><rect x="0.500" y="0.500" width="13.500" height="13.500" fill="#1c1c70"/><rect x="1.200" y="1.200" width="9" height="12" fill="url(#gIcoB)"/><rect x="10.700" y="1.200" width="2.300" height="12" fill="url(#gIcoR)"/><path d="M0.500,14.500 h14 v-13.500" stroke="#6a6a9a" stroke-width=".8" fill="none" opacity=".7"/><path d="M3,5 q0,-2.500 3,-2.500 q3,0 3,2.500 v5 q0,1.500 -3,1.500 q-3,0 -3,-1.500z" fill="#fff"/><rect x="2.800" y="4.500" width="1.300" height="6" fill="#7a30d8"/><rect x="4.600" y="5" width="2" height="6" fill="#5a1890"/><path d="M6.500,6 l2.500,4.500" stroke="#202020" stroke-width="1"/><path d="M3.500,3.500 q2.500,-1.500 5,0" stroke="#303030" stroke-width=".8" fill="none" stroke-dasharray="1.200 .8"/></svg>
<svg class="a" style="left:88px;top:597px" width="6" height="6" viewBox="0 0 6 6"><path d="M0.500,3 l1.500,2 l3,-4.500" stroke="#e01818" stroke-width="1.300" fill="none"/></svg>
<div class="a" style="left:112px;top:595px;width:27px;height:17px;background:#d5d4cc;border:1px dotted #808080"></div>
<span class="t" style="left:115px;top:598px;transform:scaleX(0.8533);transform-origin:0 0;">FS</span>
<div class="a" style="left:76px;top:615px;width:9px;height:9px;border:1px solid #7b9ab8;background:linear-gradient(180deg,#fff 0,#fff 40%,#d6cebf 100%);border-radius:1.5px"></div>
<div class="a" style="left:78px;top:619px;width:5px;height:1px;background:#000"></div>
<div class="a" style="left:80px;top:617px;width:1px;height:5px;background:#000"></div>
<div class="a" style="left:86px;top:619px;width:5px;height:1px;background-image:linear-gradient(90deg,#808080 50%,transparent 50%);background-size:2px 1px"></div>
<svg class="a" style="left:97px;top:613px" width="12" height="16" viewBox="0 0 12 16"><path d="M3.500,1 h3 v2.500 l1,2 v6 h-5 v-6 l1,-2z" fill="#f4f6ff" stroke="#3a3ac0" stroke-width=".8"/><rect x="3.800" y="0.300" width="2.400" height="1.200" fill="#5a50d0"/><rect x="4" y="1.600" width="2" height="2.300" fill="#f07020"/><rect x="4.300" y="3.600" width="1.400" height="1.200" fill="#f8d040"/><path d="M7.500,4.500 h3.500 v8 h-3.500z" fill="#eef0ff" stroke="#3a3ac0" stroke-width=".8"/><path d="M8,3 l1.300,1.500 l1.300,-1.500" stroke="#3a3ac0" stroke-width=".9" fill="none"/><rect x="8.800" y="9.500" width="1.600" height="2" fill="#38c038"/><path d="M0.500,8 h4 v3.500 l-1.200,3.500 h-1.600 l-1.200,-3.500z" fill="#dcecff" stroke="#2848d0" stroke-width=".9"/><rect x="1.200" y="8.300" width="2.600" height="1.500" fill="#58a0f0"/></svg>
<span class="t" style="left:113px;top:614px;transform:scaleX(0.9517);transform-origin:0 0;">Link [ Link ]</span>
<div class="a" style="left:81px;top:635px;width:10px;height:1px;background-image:linear-gradient(90deg,#808080 50%,transparent 50%);background-size:2px 1px"></div>
<svg class="a" style="left:96px;top:630px" width="15" height="15" viewBox="0 0 15 15"><rect x="0.500" y="0.500" width="13.500" height="13.500" fill="#1c1c70"/><rect x="1.200" y="1.200" width="9" height="12" fill="url(#gIcoB)"/><rect x="10.700" y="1.200" width="2.300" height="12" fill="url(#gIcoR)"/><path d="M0.500,14.500 h14 v-13.500" stroke="#6a6a9a" stroke-width=".8" fill="none" opacity=".7"/><rect x="2.500" y="2.500" width="2" height="2" fill="none" stroke="#1828a8" stroke-width=".9"/><path d="M4.500,5.500 v5 M4.500,5.800 h2.200 v2.200 h-2.200" stroke="#1828a8" stroke-width="1" fill="none"/><path d="M9.300,9 h-2.200 v2.600 h2.200" stroke="#1828a8" stroke-width="1" fill="none"/></svg>
<span class="t" style="left:113px;top:630px;transform:scaleX(0.9195);transform-origin:0 0;">OpcSnmp</span>
<div class="a" style="left:76px;top:647px;width:9px;height:9px;border:1px solid #7b9ab8;background:linear-gradient(180deg,#fff 0,#fff 40%,#d6cebf 100%);border-radius:1.5px"></div>
<div class="a" style="left:78px;top:651px;width:5px;height:1px;background:#000"></div>
<div class="a" style="left:80px;top:649px;width:1px;height:5px;background:#000"></div>
<div class="a" style="left:86px;top:651px;width:5px;height:1px;background-image:linear-gradient(90deg,#808080 50%,transparent 50%);background-size:2px 1px"></div>
<svg class="a" style="left:97px;top:645px" width="12" height="16" viewBox="0 0 12 16"><path d="M3.500,1 h3 v2.500 l1,2 v6 h-5 v-6 l1,-2z" fill="#f4f6ff" stroke="#3a3ac0" stroke-width=".8"/><rect x="3.800" y="0.300" width="2.400" height="1.200" fill="#5a50d0"/><rect x="4" y="1.600" width="2" height="2.300" fill="#f07020"/><rect x="4.300" y="3.600" width="1.400" height="1.200" fill="#f8d040"/><path d="M7.500,4.500 h3.500 v8 h-3.500z" fill="#eef0ff" stroke="#3a3ac0" stroke-width=".8"/><path d="M8,3 l1.300,1.500 l1.300,-1.500" stroke="#3a3ac0" stroke-width=".9" fill="none"/><rect x="8.800" y="9.500" width="1.600" height="2" fill="#38c038"/><path d="M0.500,8 h4 v3.500 l-1.200,3.500 h-1.600 l-1.200,-3.500z" fill="#dcecff" stroke="#2848d0" stroke-width=".9"/><rect x="1.200" y="8.300" width="2.600" height="1.500" fill="#58a0f0"/></svg>
<span class="t" style="left:113px;top:646px;transform:scaleX(0.8496);transform-origin:0 0;">SNMP</span>
<div class="a" style="left:57px;top:663px;width:9px;height:9px;border:1px solid #7b9ab8;background:linear-gradient(180deg,#fff 0,#fff 40%,#d6cebf 100%);border-radius:1.5px"></div>
<div class="a" style="left:59px;top:667px;width:5px;height:1px;background:#000"></div>
<div class="a" style="left:61px;top:665px;width:1px;height:5px;background:#000"></div>
<div class="a" style="left:67px;top:667px;width:5px;height:1px;background-image:linear-gradient(90deg,#808080 50%,transparent 50%);background-size:2px 1px"></div>
<svg class="a" style="left:77px;top:662px" width="14" height="14" viewBox="0 0 14 14"><path d="M5.87,0.50 L8.13,0.50 L8.17,2.14 L9.61,2.74 L10.80,1.60 L12.40,3.20 L11.26,4.39 L11.86,5.83 L13.50,5.87 L13.50,8.13 L11.86,8.17 L11.26,9.61 L12.40,10.80 L10.80,12.40 L9.61,11.26 L8.17,11.86 L8.13,13.50 L5.87,13.50 L5.83,11.86 L4.39,11.26 L3.20,12.40 L1.60,10.80 L2.74,9.61 L2.14,8.17 L0.50,8.13 L0.50,5.87 L2.14,5.83 L2.74,4.39 L1.60,3.20 L3.20,1.60 L4.39,2.74 L5.83,2.14Z" fill="#fff" stroke="#2222c4" stroke-width="0.85" stroke-linejoin="miter"/><circle cx="7" cy="7" r="2.900" fill="url(#gBlue)"/></svg>
<span class="t" style="left:95px;top:662px;transform:scaleX(0.8576);transform-origin:0 0;">AEKNS</span>
<div class="a" style="left:57px;top:679px;width:9px;height:9px;border:1px solid #7b9ab8;background:linear-gradient(180deg,#fff 0,#fff 40%,#d6cebf 100%);border-radius:1.5px"></div>
<div class="a" style="left:59px;top:683px;width:5px;height:1px;background:#000"></div>
<div class="a" style="left:61px;top:681px;width:1px;height:5px;background:#000"></div>
<div class="a" style="left:67px;top:683px;width:5px;height:1px;background-image:linear-gradient(90deg,#808080 50%,transparent 50%);background-size:2px 1px"></div>
<svg class="a" style="left:77px;top:678px" width="14" height="14" viewBox="0 0 14 14"><path d="M5.87,0.50 L8.13,0.50 L8.17,2.14 L9.61,2.74 L10.80,1.60 L12.40,3.20 L11.26,4.39 L11.86,5.83 L13.50,5.87 L13.50,8.13 L11.86,8.17 L11.26,9.61 L12.40,10.80 L10.80,12.40 L9.61,11.26 L8.17,11.86 L8.13,13.50 L5.87,13.50 L5.83,11.86 L4.39,11.26 L3.20,12.40 L1.60,10.80 L2.74,9.61 L2.14,8.17 L0.50,8.13 L0.50,5.87 L2.14,5.83 L2.74,4.39 L1.60,3.20 L3.20,1.60 L4.39,2.74 L5.83,2.14Z" fill="#fff" stroke="#2222c4" stroke-width="0.85" stroke-linejoin="miter"/><circle cx="7" cy="7" r="2.900" fill="url(#gBlue)"/></svg>
<span class="t" style="left:95px;top:678px;transform:scaleX(0.8987);transform-origin:0 0;">AEKust</span>
<div class="a" style="left:57px;top:695px;width:9px;height:9px;border:1px solid #7b9ab8;background:linear-gradient(180deg,#fff 0,#fff 40%,#d6cebf 100%);border-radius:1.5px"></div>
<div class="a" style="left:59px;top:699px;width:5px;height:1px;background:#000"></div>
<div class="a" style="left:61px;top:697px;width:1px;height:5px;background:#000"></div>
<div class="a" style="left:67px;top:699px;width:5px;height:1px;background-image:linear-gradient(90deg,#808080 50%,transparent 50%);background-size:2px 1px"></div>
<svg class="a" style="left:77px;top:694px" width="14" height="14" viewBox="0 0 14 14"><path d="M5.87,0.50 L8.13,0.50 L8.17,2.14 L9.61,2.74 L10.80,1.60 L12.40,3.20 L11.26,4.39 L11.86,5.83 L13.50,5.87 L13.50,8.13 L11.86,8.17 L11.26,9.61 L12.40,10.80 L10.80,12.40 L9.61,11.26 L8.17,11.86 L8.13,13.50 L5.87,13.50 L5.83,11.86 L4.39,11.26 L3.20,12.40 L1.60,10.80 L2.74,9.61 L2.14,8.17 L0.50,8.13 L0.50,5.87 L2.14,5.83 L2.74,4.39 L1.60,3.20 L3.20,1.60 L4.39,2.74 L5.83,2.14Z" fill="#fff" stroke="#2222c4" stroke-width="0.85" stroke-linejoin="miter"/><circle cx="7" cy="7" r="2.900" fill="url(#gBlue)"/></svg>
<span class="t" style="left:95px;top:694px;transform:scaleX(0.8765);transform-origin:0 0;">AELONGSCAN</span>
<div class="a" style="left:57px;top:711px;width:9px;height:9px;border:1px solid #7b9ab8;background:linear-gradient(180deg,#fff 0,#fff 40%,#d6cebf 100%);border-radius:1.5px"></div>
<div class="a" style="left:59px;top:715px;width:5px;height:1px;background:#000"></div>
<div class="a" style="left:61px;top:713px;width:1px;height:5px;background:#000"></div>
<div class="a" style="left:67px;top:715px;width:5px;height:1px;background-image:linear-gradient(90deg,#808080 50%,transparent 50%);background-size:2px 1px"></div>
<svg class="a" style="left:77px;top:710px" width="14" height="14" viewBox="0 0 14 14"><path d="M5.87,0.50 L8.13,0.50 L8.17,2.14 L9.61,2.74 L10.80,1.60 L12.40,3.20 L11.26,4.39 L11.86,5.83 L13.50,5.87 L13.50,8.13 L11.86,8.17 L11.26,9.61 L12.40,10.80 L10.80,12.40 L9.61,11.26 L8.17,11.86 L8.13,13.50 L5.87,13.50 L5.83,11.86 L4.39,11.26 L3.20,12.40 L1.60,10.80 L2.74,9.61 L2.14,8.17 L0.50,8.13 L0.50,5.87 L2.14,5.83 L2.74,4.39 L1.60,3.20 L3.20,1.60 L4.39,2.74 L5.83,2.14Z" fill="#fff" stroke="#2222c4" stroke-width="0.85" stroke-linejoin="miter"/><circle cx="7" cy="7" r="2.900" fill="url(#gBlue)"/></svg>
<span class="t" style="left:95px;top:710px;transform:scaleX(0.8676);transform-origin:0 0;">AENP</span>
<div class="a" style="left:57px;top:727px;width:9px;height:9px;border:1px solid #7b9ab8;background:linear-gradient(180deg,#d0c8b8 0,#fff 60%,#fff 100%);border-radius:1.5px"></div>
<div class="a" style="left:59px;top:731px;width:5px;height:1px;background:#000"></div>
<div class="a" style="left:67px;top:731px;width:5px;height:1px;background-image:linear-gradient(90deg,#808080 50%,transparent 50%);background-size:2px 1px"></div>
<svg class="a" style="left:77px;top:726px" width="14" height="14" viewBox="0 0 14 14"><path d="M5.87,0.50 L8.13,0.50 L8.17,2.14 L9.61,2.74 L10.80,1.60 L12.40,3.20 L11.26,4.39 L11.86,5.83 L13.50,5.87 L13.50,8.13 L11.86,8.17 L11.26,9.61 L12.40,10.80 L10.80,12.40 L9.61,11.26 L8.17,11.86 L8.13,13.50 L5.87,13.50 L5.83,11.86 L4.39,11.26 L3.20,12.40 L1.60,10.80 L2.74,9.61 L2.14,8.17 L0.50,8.13 L0.50,5.87 L2.14,5.83 L2.74,4.39 L1.60,3.20 L3.20,1.60 L4.39,2.74 L5.83,2.14Z" fill="#fff" stroke="#2222c4" stroke-width="0.85" stroke-linejoin="miter"/><circle cx="7" cy="7" r="2.900" fill="url(#gBlue)"/></svg>
<span class="t" style="left:95px;top:726px;transform:scaleX(0.8509);transform-origin:0 0;">AENPSK</span>
<div class="a" style="left:76px;top:743px;width:9px;height:9px;border:1px solid #7b9ab8;background:linear-gradient(180deg,#fff 0,#fff 40%,#d6cebf 100%);border-radius:1.5px"></div>
<div class="a" style="left:78px;top:747px;width:5px;height:1px;background:#000"></div>
<div class="a" style="left:80px;top:745px;width:1px;height:5px;background:#000"></div>
<div class="a" style="left:86px;top:747px;width:5px;height:1px;background-image:linear-gradient(90deg,#808080 50%,transparent 50%);background-size:2px 1px"></div>
<svg class="a" style="left:97px;top:741px" width="12" height="16" viewBox="0 0 12 16"><path d="M3.500,1 h3 v2.500 l1,2 v6 h-5 v-6 l1,-2z" fill="#f4f6ff" stroke="#3a3ac0" stroke-width=".8"/><rect x="3.800" y="0.300" width="2.400" height="1.200" fill="#5a50d0"/><rect x="4" y="1.600" width="2" height="2.300" fill="#f07020"/><rect x="4.300" y="3.600" width="1.400" height="1.200" fill="#f8d040"/><path d="M7.500,4.500 h3.500 v8 h-3.500z" fill="#eef0ff" stroke="#3a3ac0" stroke-width=".8"/><path d="M8,3 l1.300,1.500 l1.300,-1.500" stroke="#3a3ac0" stroke-width=".9" fill="none"/><rect x="8.800" y="9.500" width="1.600" height="2" fill="#38c038"/><path d="M0.500,8 h4 v3.500 l-1.200,3.500 h-1.600 l-1.200,-3.500z" fill="#dcecff" stroke="#2848d0" stroke-width=".9"/><rect x="1.200" y="8.300" width="2.600" height="1.500" fill="#58a0f0"/></svg>
<span class="t" style="left:113px;top:742px;transform:scaleX(0.8342);transform-origin:0 0;">NPSK</span>
<div class="a" style="left:76px;top:759px;width:9px;height:9px;border:1px solid #7b9ab8;background:linear-gradient(180deg,#fff 0,#fff 40%,#d6cebf 100%);border-radius:1.5px"></div>
<div class="a" style="left:78px;top:763px;width:5px;height:1px;background:#000"></div>
<div class="a" style="left:80px;top:761px;width:1px;height:5px;background:#000"></div>
<div class="a" style="left:86px;top:763px;width:5px;height:1px;background-image:linear-gradient(90deg,#808080 50%,transparent 50%);background-size:2px 1px"></div>
<svg class="a" style="left:97px;top:757px" width="12" height="16" viewBox="0 0 12 16"><path d="M3.500,1 h3 v2.500 l1,2 v6 h-5 v-6 l1,-2z" fill="#f4f6ff" stroke="#3a3ac0" stroke-width=".8"/><rect x="3.800" y="0.300" width="2.400" height="1.200" fill="#5a50d0"/><rect x="4" y="1.600" width="2" height="2.300" fill="#f07020"/><rect x="4.300" y="3.600" width="1.400" height="1.200" fill="#f8d040"/><path d="M7.500,4.500 h3.500 v8 h-3.500z" fill="#eef0ff" stroke="#3a3ac0" stroke-width=".8"/><path d="M8,3 l1.300,1.500 l1.300,-1.500" stroke="#3a3ac0" stroke-width=".9" fill="none"/><rect x="8.800" y="9.500" width="1.600" height="2" fill="#38c038"/><path d="M0.500,8 h4 v3.500 l-1.200,3.500 h-1.600 l-1.200,-3.500z" fill="#dcecff" stroke="#2848d0" stroke-width=".9"/><rect x="1.200" y="8.300" width="2.600" height="1.500" fill="#58a0f0"/></svg>
<span class="t" style="left:113px;top:758px;transform:scaleX(0.9208);transform-origin:0 0;">NPSK_PA [ NPSK_PA ]</span>
<div class="a" style="left:76px;top:775px;width:9px;height:9px;border:1px solid #7b9ab8;background:linear-gradient(180deg,#fff 0,#fff 40%,#d6cebf 100%);border-radius:1.5px"></div>
<div class="a" style="left:78px;top:779px;width:5px;height:1px;background:#000"></div>
<div class="a" style="left:80px;top:777px;width:1px;height:5px;background:#000"></div>
<div class="a" style="left:86px;top:779px;width:5px;height:1px;background-image:linear-gradient(90deg,#808080 50%,transparent 50%);background-size:2px 1px"></div>
<svg class="a" style="left:97px;top:773px" width="12" height="16" viewBox="0 0 12 16"><path d="M3.500,1 h3 v2.500 l1,2 v6 h-5 v-6 l1,-2z" fill="#f4f6ff" stroke="#3a3ac0" stroke-width=".8"/><rect x="3.800" y="0.300" width="2.400" height="1.200" fill="#5a50d0"/><rect x="4" y="1.600" width="2" height="2.300" fill="#f07020"/><rect x="4.300" y="3.600" width="1.400" height="1.200" fill="#f8d040"/><path d="M7.500,4.500 h3.500 v8 h-3.500z" fill="#eef0ff" stroke="#3a3ac0" stroke-width=".8"/><path d="M8,3 l1.300,1.500 l1.300,-1.500" stroke="#3a3ac0" stroke-width=".9" fill="none"/><rect x="8.800" y="9.500" width="1.600" height="2" fill="#38c038"/><path d="M0.500,8 h4 v3.500 l-1.200,3.500 h-1.600 l-1.200,-3.500z" fill="#dcecff" stroke="#2848d0" stroke-width=".9"/><rect x="1.200" y="8.300" width="2.600" height="1.500" fill="#58a0f0"/></svg>
<span class="t" style="left:113px;top:774px;transform:scaleX(0.9092);transform-origin:0 0;">NPSK_PAZ [ NPSK_PAZ ]</span>
<div class="a" style="left:76px;top:791px;width:9px;height:9px;border:1px solid #7b9ab8;background:linear-gradient(180deg,#d0c8b8 0,#fff 60%,#fff 100%);border-radius:1.5px"></div>
<div class="a" style="left:78px;top:795px;width:5px;height:1px;background:#000"></div>
<div class="a" style="left:86px;top:795px;width:5px;height:1px;background-image:linear-gradient(90deg,#808080 50%,transparent 50%);background-size:2px 1px"></div>
<svg class="a" style="left:97px;top:789px" width="12" height="16" viewBox="0 0 12 16"><path d="M3.500,1 h3 v2.500 l1,2 v6 h-5 v-6 l1,-2z" fill="#f4f6ff" stroke="#3a3ac0" stroke-width=".8"/><rect x="3.800" y="0.300" width="2.400" height="1.200" fill="#5a50d0"/><rect x="4" y="1.600" width="2" height="2.300" fill="#f07020"/><rect x="4.300" y="3.600" width="1.400" height="1.200" fill="#f8d040"/><path d="M7.500,4.500 h3.500 v8 h-3.500z" fill="#eef0ff" stroke="#3a3ac0" stroke-width=".8"/><path d="M8,3 l1.300,1.500 l1.300,-1.500" stroke="#3a3ac0" stroke-width=".9" fill="none"/><rect x="8.800" y="9.500" width="1.600" height="2" fill="#38c038"/><path d="M0.500,8 h4 v3.500 l-1.200,3.500 h-1.600 l-1.200,-3.500z" fill="#dcecff" stroke="#2848d0" stroke-width=".9"/><rect x="1.200" y="8.300" width="2.600" height="1.500" fill="#58a0f0"/></svg>
<span class="t" style="left:113px;top:790px;transform:scaleX(0.8885);transform-origin:0 0;">NPSK_RSU [ NPSK_RSU ]</span>
<div class="a" style="left:100px;top:811px;width:10px;height:1px;background-image:linear-gradient(90deg,#808080 50%,transparent 50%);background-size:2px 1px"></div>
<svg class="a" style="left:116px;top:807px" width="11" height="11" viewBox="0 0 11 11"><circle cx="5.5" cy="5.5" r="5.2" fill="url(#gBlue)"/></svg>
<span class="t" style="left:132px;top:806px;transform:scaleX(0.9205);transform-origin:0 0;">NPSK_RSU_AI_0000</span>
<div class="a" style="left:100px;top:827px;width:10px;height:1px;background-image:linear-gradient(90deg,#808080 50%,transparent 50%);background-size:2px 1px"></div>
<svg class="a" style="left:116px;top:823px" width="11" height="11" viewBox="0 0 11 11"><circle cx="5.5" cy="5.5" r="5.2" fill="url(#gBlue)"/></svg>
<span class="t" style="left:132px;top:822px;transform:scaleX(0.9205);transform-origin:0 0;">NPSK_RSU_AI_0001</span>
<div class="a" style="left:100px;top:843px;width:10px;height:1px;background-image:linear-gradient(90deg,#808080 50%,transparent 50%);background-size:2px 1px"></div>
<svg class="a" style="left:116px;top:839px" width="11" height="11" viewBox="0 0 11 11"><circle cx="5.5" cy="5.5" r="5.2" fill="url(#gBlue)"/></svg>
<span class="t" style="left:132px;top:838px;transform:scaleX(0.9205);transform-origin:0 0;">NPSK_RSU_AI_0002</span>
<div class="a" style="left:100px;top:859px;width:10px;height:1px;background-image:linear-gradient(90deg,#808080 50%,transparent 50%);background-size:2px 1px"></div>
<svg class="a" style="left:116px;top:855px" width="11" height="11" viewBox="0 0 11 11"><circle cx="5.5" cy="5.5" r="5.2" fill="url(#gBlue)"/></svg>
<span class="t" style="left:132px;top:854px;transform:scaleX(0.9205);transform-origin:0 0;">NPSK_RSU_AI_0003</span>
<div class="a" style="left:100px;top:875px;width:10px;height:1px;background-image:linear-gradient(90deg,#808080 50%,transparent 50%);background-size:2px 1px"></div>
<svg class="a" style="left:116px;top:871px" width="11" height="11" viewBox="0 0 11 11"><circle cx="5.5" cy="5.5" r="5.2" fill="url(#gBlue)"/></svg>
<span class="t" style="left:132px;top:870px;transform:scaleX(0.9205);transform-origin:0 0;">NPSK_RSU_AI_0004</span>
<div class="a" style="left:100px;top:891px;width:10px;height:1px;background-image:linear-gradient(90deg,#808080 50%,transparent 50%);background-size:2px 1px"></div>
<svg class="a" style="left:116px;top:887px" width="11" height="11" viewBox="0 0 11 11"><circle cx="5.5" cy="5.5" r="5.2" fill="url(#gBlue)"/></svg>
<span class="t" style="left:132px;top:886px;transform:scaleX(0.9205);transform-origin:0 0;">NPSK_RSU_AI_0005</span>
<div class="a hatch" style="left:289px;top:531px;width:17px;height:381px"></div>
<div class="a sbtn" style="left:289px;top:531px;width:17px;height:16px"></div>
<svg class="a" style="left:294px;top:537px" width="7" height="4" viewBox="0 0 7 4"><path d="M0,4 h7 l-3.500,-4z" fill="#000"/></svg>
<div class="a sbtn" style="left:289px;top:896px;width:17px;height:16px"></div>
<svg class="a" style="left:294px;top:902px" width="7" height="4" viewBox="0 0 7 4"><path d="M0,0 h7 l-3.500,4z" fill="#000"/></svg>
<div class="a sbtn" style="left:289px;top:547px;width:17px;height:31px"></div>
<div class="a hatch" style="left:0px;top:912px;width:289px;height:17px"></div>
<div class="a sbtn" style="left:0px;top:912px;width:16px;height:17px"></div>
<svg class="a" style="left:5px;top:917px" width="4" height="7" viewBox="0 0 4 7"><path d="M4,0 v7 l-4,-3.500z" fill="#808080"/></svg>
<div class="a sbtn" style="left:273px;top:912px;width:16px;height:17px"></div>
<svg class="a" style="left:279px;top:917px" width="4" height="7" viewBox="0 0 4 7"><path d="M0,0 v7 l4,-3.500z" fill="#808080"/></svg>
<div class="a" style="left:289px;top:912px;width:17px;height:17px;background:#808080"></div>
<div class="a" style="left:0px;top:928px;width:306px;height:1px;background:#fff"></div>
<div class="a" style="left:0px;top:929px;width:306px;height:15px;background:#d5d4cc"></div>
<div class="a" style="left:0px;top:931px;width:61px;height:13px;background:linear-gradient(180deg,#f3f2ef,#e6e4de)"></div>
<div class="a" style="left:61px;top:931px;width:84px;height:13px;background:#dddad3;border-right:1px solid #000;border-left:1px solid #f4f3f0"></div>
<div class="a" style="left:145px;top:931px;width:77px;height:13px;background:linear-gradient(180deg,#f3f2ef,#e6e4de)"></div>
<div class="a" style="left:222px;top:934px;width:1px;height:10px;background:#0a246a"></div>
<svg class="a" style="left:4px;top:934px" width="18" height="12" viewBox="0 0 18 12"><path d="M4,6 L12,2 M4,6 L13,10" stroke="#1c62c8" stroke-width="1.600"/><circle cx="3.5" cy="6" r="2.8" fill="url(#gBlue)"/><circle cx="12" cy="2.5" r="2.5" fill="url(#gBlue)"/><circle cx="13" cy="10" r="3.5" fill="url(#gBlue)"/></svg>
<span class="t" style="left:25px;top:935px;transform:scaleX(0.9343);transform-origin:0 0;">Model</span>
<svg class="a" style="left:63px;top:935px" width="18" height="12" viewBox="0 0 18 12"><path d="M0.500,3.500 h4 v-2.500 l4.500,4.500 l-4.500,4.500 v-2.500 h-4z" fill="#eaf3ff" stroke="#2c6cd0" stroke-width="1"/><circle cx="13" cy="8.5" r="4.6" fill="url(#gBlue)"/></svg>
<span class="t" style="left:81px;top:935px;transform:scaleX(0.9707);transform-origin:0 0;">Deployment</span>
<svg class="a" style="left:147px;top:934px" width="18" height="12" viewBox="0 0 18 12"><circle cx="3.500" cy="3.500" r="2.600" fill="#cfe4ff" stroke="#6aa0e8" stroke-width=".8"/><circle cx="7" cy="6.500" r="2.800" fill="#b8d8ff" stroke="#6aa0e8" stroke-width=".8"/><circle cx="12" cy="11" r="4.4" fill="url(#gBlue)"/></svg>
<span class="t" style="left:167px;top:935px;transform:scaleX(0.9691);transform-origin:0 0;">Derivation</span>
<div class="a" style="left:306px;top:47px;width:1px;height:897px;background:#0a246a"></div>
<div class="a" style="left:307px;top:47px;width:3px;height:897px;background:#fff"></div>
<div class="a" style="left:310px;top:47px;width:1px;height:897px;background:#0a246a"></div>
<div class="a" style="left:311px;top:47px;width:768px;height:27px;background:linear-gradient(180deg,#dcdbe3 0,#d7d6df 100%)"></div>
<div class="a" style="left:311px;top:47px;width:768px;height:1px;background:#808080"></div>
<svg class="a" style="left:321px;top:55px" width="12" height="12" viewBox="0 0 12 12"><circle cx="6" cy="6" r="5.2" fill="url(#gBlue)"/></svg>
<span class="t" style="left:345.5px;top:54px;font-size:13px;line-height:15px;font-weight:bold;transform:scaleX(0.9983);transform-origin:0 0;">NPSK_RSU_AI_0079</span>
<div class="a" style="left:311px;top:74px;width:768px;height:24px;background:#d5d4cc"></div>
<div class="a" style="left:311px;top:74px;width:768px;height:2px;background:#e6e5df"></div>
<div class="a" style="left:311px;top:98px;width:768px;height:566px;background:#fff"></div>
<div class="a" style="left:311px;top:76px;width:4px;height:588px;background:#eceae5"></div>
<div class="a" style="left:315px;top:98px;width:3px;height:566px;background:#d5d4cc"></div>
<div class="a" style="left:314px;top:77px;width:88px;height:21px;background:#d5d4cc;border-top:1px solid #fff;border-left:1px solid #fff;border-right:2px solid #404040;border-radius:2px 2px 0 0"></div>
<span class="t" style="left:321px;top:80px;letter-spacing:0.01px;">Field Attributes</span>
<div class="a" style="left:402px;top:79px;width:102px;height:18px;background:#d5d4cc;border-top:1px solid #fff;border-right:2px solid #404040;border-radius:2px 2px 0 0"></div>
<div class="a" style="left:503px;top:80px;width:1px;height:17px;background:#808080"></div>
<span class="t" style="left:407px;top:82px;letter-spacing:0.00px;">Object Information</span>
<div class="a" style="left:504px;top:79px;width:44px;height:18px;background:#d5d4cc;border-top:1px solid #fff;border-right:2px solid #404040;border-radius:2px 2px 0 0"></div>
<div class="a" style="left:547px;top:80px;width:1px;height:17px;background:#808080"></div>
<span class="t" style="left:510px;top:82px;transform:scaleX(0.9219);transform-origin:0 0;">Scripts</span>
<div class="a" style="left:548px;top:79px;width:41px;height:18px;background:#d5d4cc;border-top:1px solid #fff;border-right:2px solid #404040;border-radius:2px 2px 0 0"></div>
<div class="a" style="left:588px;top:80px;width:1px;height:17px;background:#808080"></div>
<span class="t" style="left:554px;top:82px;transform:scaleX(0.8705);transform-origin:0 0;">UDAs</span>
<div class="a" style="left:589px;top:79px;width:64px;height:18px;background:#d5d4cc;border-top:1px solid #fff;border-right:2px solid #404040;border-radius:2px 2px 0 0"></div>
<div class="a" style="left:652px;top:80px;width:1px;height:17px;background:#808080"></div>
<span class="t" style="left:595px;top:82px;transform:scaleX(0.9658);transform-origin:0 0;">Extensions</span>
<div class="a" style="left:653px;top:79px;width:53px;height:18px;background:#d5d4cc;border-top:1px solid #fff;border-right:2px solid #404040;border-radius:2px 2px 0 0"></div>
<div class="a" style="left:705px;top:80px;width:1px;height:17px;background:#808080"></div>
<span class="t" style="left:659px;top:82px;transform:scaleX(0.9312);transform-origin:0 0;">Graphics</span>
<div class="a" style="left:402px;top:96px;width:677px;height:1px;background:#fff"></div>
<div class="a" style="left:402px;top:97px;width:677px;height:1px;background:#e6e5de"></div>
<div class="a" style="left:422px;top:110px;width:40px;height:24px;background:#fff;border:1px solid #404040"></div>
<div class="a" style="left:470px;top:110px;width:40px;height:24px;background:#fff;border:1px solid #404040"></div>
<div class="a" style="left:518px;top:110px;width:40px;height:24px;background:#fff;border:1px solid #404040"></div>
<svg class="a" style="left:428px;top:116px" width="16" height="14" viewBox="0 0 16 14"><rect x="0.500" y="0.500" width="15" height="13" rx="1.500" fill="url(#gOr)" stroke="#b45c48" stroke-width="1"/><path d="M2.500,10.500 h3 v-6.500 h5 v6.500 h3" stroke="#5a3000" stroke-width="1.200" fill="none"/></svg>
<svg class="a" style="left:476px;top:116px" width="16" height="14" viewBox="0 0 16 14"><rect x="0.500" y="0.500" width="15" height="13" rx="1.500" fill="url(#gOr)" stroke="#b45c48" stroke-width="1"/><path d="M2.500,8 c1.500,-6 4,-6 5.500,0 c1.500,5 4,4 5.500,-2" stroke="#5a3000" stroke-width="1.200" fill="none"/></svg>
<div class="a" style="left:448px;top:122px;width:10px;height:2px;background:#0000f0"></div>
<div class="a" style="left:452px;top:118px;width:2px;height:10px;background:#0000f0"></div>
<div class="a" style="left:496px;top:122px;width:10px;height:2px;background:#0000f0"></div>
<div class="a" style="left:500px;top:118px;width:2px;height:10px;background:#0000f0"></div>
<svg class="a" style="left:533px;top:117px" width="11" height="11" viewBox="0 0 11 11"><path d="M1,1 L10,10 M10,1 L1,10" stroke="#bcbab4" stroke-width="1.700"/></svg>
<div class="a" style="left:326px;top:138px;width:232px;height:253px;background:#d5d4cc"></div>
<span class="t" style="left:335.5px;top:148px;">Field attributes:</span>
<div class="a" style="left:330px;top:162px;width:223px;height:223px;background:#fff;border:1px solid #404040;border-right-color:#e0ded8;border-bottom-color:#e0ded8"></div>
<div class="a" style="left:330px;top:162px;width:1px;height:223px;background:#808080"></div>
<div class="a" style="left:331px;top:163px;width:1px;height:221px;background:#404040"></div>
<div class="a" style="left:331px;top:163px;width:221px;height:17px;background:#d5d4cc;border:1px solid #404040;border-top-color:#404040;border-left-color:#fff"></div>
<div class="a" style="left:331px;top:179px;width:221px;height:2px;background:#404040"></div>
<div class="a" style="left:351px;top:164px;width:1px;height:15px;background:#808080"></div>
<div class="a" style="left:352px;top:164px;width:1px;height:15px;background:#fff"></div>
<span class="t" style="left:358px;top:167px;transform:scaleX(0.8860);transform-origin:0 0;">Name</span>
<div class="a" style="left:332px;top:197px;width:220px;height:1px;background:#d8d6cf"></div>
<div class="a" style="left:332px;top:214px;width:220px;height:1px;background:#d8d6cf"></div>
<div class="a" style="left:332px;top:231px;width:220px;height:1px;background:#d8d6cf"></div>
<div class="a" style="left:332px;top:248px;width:220px;height:1px;background:#d8d6cf"></div>
<div class="a" style="left:332px;top:265px;width:220px;height:1px;background:#d8d6cf"></div>
<div class="a" style="left:332px;top:282px;width:220px;height:1px;background:#d8d6cf"></div>
<div class="a" style="left:332px;top:299px;width:220px;height:1px;background:#d8d6cf"></div>
<div class="a" style="left:332px;top:316px;width:220px;height:1px;background:#d8d6cf"></div>
<div class="a" style="left:332px;top:333px;width:220px;height:1px;background:#d8d6cf"></div>
<div class="a" style="left:332px;top:350px;width:220px;height:1px;background:#d8d6cf"></div>
<div class="a" style="left:332px;top:367px;width:220px;height:1px;background:#d8d6cf"></div>
<div class="a" style="left:332px;top:384px;width:220px;height:1px;background:#d8d6cf"></div>
<div class="a" style="left:352px;top:181px;width:1px;height:203px;background:#d8d6cf"></div>
<div class="a" style="left:326px;top:395px;width:232px;height:253px;background:#d5d4cc"></div>
<span class="t" style="left:335.5px;top:405px;">Inherited field attributes:</span>
<div class="a" style="left:330px;top:419px;width:223px;height:223px;background:#fff;border:1px solid #404040;border-right-color:#e0ded8;border-bottom-color:#e0ded8"></div>
<div class="a" style="left:330px;top:419px;width:1px;height:223px;background:#808080"></div>
<div class="a" style="left:331px;top:420px;width:1px;height:221px;background:#404040"></div>
<div class="a" style="left:331px;top:420px;width:221px;height:17px;background:#d5d4cc;border:1px solid #404040;border-top-color:#404040;border-left-color:#fff"></div>
<div class="a" style="left:331px;top:436px;width:221px;height:2px;background:#404040"></div>
<div class="a" style="left:351px;top:421px;width:1px;height:15px;background:#808080"></div>
<div class="a" style="left:352px;top:421px;width:1px;height:15px;background:#fff"></div>
<span class="t" style="left:358px;top:424px;transform:scaleX(0.8860);transform-origin:0 0;">Name</span>
<div class="a" style="left:332px;top:454px;width:220px;height:1px;background:#d8d6cf"></div>
<div class="a" style="left:332px;top:471px;width:220px;height:1px;background:#d8d6cf"></div>
<div class="a" style="left:332px;top:488px;width:220px;height:1px;background:#d8d6cf"></div>
<div class="a" style="left:332px;top:505px;width:220px;height:1px;background:#d8d6cf"></div>
<div class="a" style="left:332px;top:522px;width:220px;height:1px;background:#d8d6cf"></div>
<div class="a" style="left:332px;top:539px;width:220px;height:1px;background:#d8d6cf"></div>
<div class="a" style="left:332px;top:556px;width:220px;height:1px;background:#d8d6cf"></div>
<div class="a" style="left:332px;top:573px;width:220px;height:1px;background:#d8d6cf"></div>
<div class="a" style="left:332px;top:590px;width:220px;height:1px;background:#d8d6cf"></div>
<div class="a" style="left:332px;top:607px;width:220px;height:1px;background:#d8d6cf"></div>
<div class="a" style="left:332px;top:624px;width:220px;height:1px;background:#d8d6cf"></div>
<div class="a" style="left:332px;top:641px;width:220px;height:1px;background:#d8d6cf"></div>
<div class="a" style="left:352px;top:438px;width:1px;height:203px;background:#d8d6cf"></div>
<div class="a" style="left:353px;top:439px;width:199px;height:15px;background:#0a246a"></div>
<div class="a" style="left:353px;top:438px;width:199px;height:1px;background-image:linear-gradient(90deg,#e8d860 50%,#0a246a 50%);background-size:2px 1px"></div>
<span class="t" style="left:358px;top:441px;color:#fff;letter-spacing:0.09px;">Value [$AI]</span>
<svg class="a" style="left:337px;top:439px" width="14" height="14" viewBox="0 0 14 14"><rect x="0.500" y="0.500" width="13" height="13" fill="url(#gPur)" stroke="#403c58"/><path d="M2.500,8 c1.500,-5 3.500,-5 5,0 c1.500,4 3.500,3 5,-1.500" stroke="#2a2430" stroke-width="1.100" fill="none"/></svg>
<span class="t" style="left:576px;top:122px;transform:scaleX(0.9257);transform-origin:0 0;">Name:</span>
<div class="a" style="left:662px;top:116px;width:152px;height:21px;background:#fff;border:1px solid;border-color:#808080 #fff #fff #808080"></div>
<div class="a" style="left:663px;top:117px;width:150px;height:19px;border:1px solid;border-color:#404040 #d5d4cc #d5d4cc #404040"></div>
<span class="t" style="left:665px;top:120px;color:#8c8a84;transform:scaleX(0.9874);transform-origin:0 0;">Value</span>
<span class="t" style="left:840px;top:122px;letter-spacing:0.15px;">Attribute type:</span>
<div class="a" style="left:926px;top:116px;width:87px;height:20px;background:#d5d4cc;border:1px solid;border-color:#808080 #fff #fff #808080"></div>
<div class="a" style="left:927px;top:117px;width:85px;height:18px;border:1px solid;border-color:#404040 #d5d4cc #d5d4cc #404040"></div>
<span class="t" style="left:929px;top:121px;color:#8c8a84;transform:scaleX(0.9626);transform-origin:0 0;">Analog</span>
<div class="a btn3d" style="left:995px;top:118px;width:16px;height:16px"></div>
<svg class="a" style="left:999px;top:124px" width="7" height="4" viewBox="0 0 7 4"><path d="M0,0 h7 l-3.500,4z" fill="#808080"/><path d="M1,1 h7 l-3.500,4z" fill="#fff" opacity=".0"/></svg>
<span class="t" style="left:576px;top:146px;transform:scaleX(0.9259);transform-origin:0 0;">Access mode:</span>
<div class="a" style="left:662px;top:140px;width:120px;height:21px;background:#fff;border:1px solid;border-color:#808080 #fff #fff #808080"></div>
<div class="a" style="left:663px;top:141px;width:118px;height:19px;border:1px solid;border-color:#404040 #d5d4cc #d5d4cc #404040"></div>
<span class="t" style="left:665px;top:145px;color:#8c8a84;letter-spacing:0.12px;">Input</span>
<div class="a btn3d" style="left:764px;top:142px;width:16px;height:17px"></div>
<svg class="a" style="left:768px;top:148px" width="7" height="4" viewBox="0 0 7 4"><path d="M0,0 h7 l-3.500,4z" fill="#808080"/><path d="M1,1 h7 l-3.500,4z" fill="#fff" opacity=".0"/></svg>
<span class="t" style="left:840px;top:146px;transform:scaleX(0.9963);transform-origin:0 0;">Data type:</span>
<div class="a" style="left:926px;top:140px;width:87px;height:20px;background:#d5d4cc;border:1px solid;border-color:#808080 #fff #fff #808080"></div>
<div class="a" style="left:927px;top:141px;width:85px;height:18px;border:1px solid;border-color:#404040 #d5d4cc #d5d4cc #404040"></div>
<span class="t" style="left:929px;top:145px;color:#8c8a84;transform:scaleX(0.9808);transform-origin:0 0;">Float</span>
<div class="a btn3d" style="left:995px;top:142px;width:16px;height:16px"></div>
<svg class="a" style="left:999px;top:148px" width="7" height="4" viewBox="0 0 7 4"><path d="M0,0 h7 l-3.500,4z" fill="#808080"/><path d="M1,1 h7 l-3.500,4z" fill="#fff" opacity=".0"/></svg>
<span class="t" style="left:576px;top:194px;transform:scaleX(0.9812);transform-origin:0 0;">Description:</span>
<div class="a" style="left:662px;top:188px;width:351px;height:40px;background:#fff;border:1px solid;border-color:#808080 #fff #fff #808080"></div>
<div class="a" style="left:663px;top:189px;width:349px;height:38px;border:1px solid;border-color:#404040 #d5d4cc #d5d4cc #404040"></div>
<span class="t" style="left:667.5px;top:193px;transform:scaleX(0.9620);transform-origin:0 0;">РСУ НПСК. L1-1 Уровень нефти в РВС-1</span>
<div class="a hatch" style="left:996px;top:190px;width:16px;height:35px"></div>
<div class="a sbtn" style="left:996px;top:190px;width:16px;height:16px"></div>
<svg class="a" style="left:1000px;top:196px" width="7" height="4" viewBox="0 0 7 4"><path d="M0,4 h7 l-3.500,-4z" fill="#808080"/></svg>
<div class="a sbtn" style="left:996px;top:209px;width:16px;height:16px"></div>
<svg class="a" style="left:1000px;top:215px" width="7" height="4" viewBox="0 0 7 4"><path d="M0,0 h7 l-3.500,4z" fill="#808080"/></svg>
<svg class="a" style="left:1026px;top:200px" width="16" height="14" viewBox="0 0 16 14"><rect x="1.500" y="7.500" width="9" height="6" fill="url(#gLk)" stroke="#767676"/><path d="M7.500,7 V3.500 Q7.500,0.800 10.300,0.800 H11.700 Q14.500,0.800 14.500,3.500 V6" stroke="#8c8c8c" stroke-width="1.200" fill="none"/></svg>
<div class="a" style="left:574px;top:234px;width:495px;height:58px;border:1px solid #a8a6a0;box-shadow:inset 0 0 0 0 #fff"></div>
<div class="a" style="left:581px;top:228px;width:31px;height:13px;background:#fff"></div>
<span class="t" style="left:583.5px;top:228px;">Value</span>
<div class="a" style="left:582px;top:249px;width:95px;height:20px;background:#fff;border:1px solid;border-color:#808080 #fff #fff #808080"></div>
<div class="a" style="left:583px;top:250px;width:93px;height:18px;border:1px solid;border-color:#404040 #d5d4cc #d5d4cc #404040"></div>
<span class="t" style="left:585px;top:253px;color:#8c8a84;transform:scaleX(0.9361);transform-origin:0 0;">7,585819</span>
<div class="a" style="left:582px;top:275px;width:13px;height:13px;background:#d5d4cc;border:1px solid;border-color:#808080 #fff #fff #808080"></div>
<div class="a" style="left:583px;top:276px;width:11px;height:11px;border:1px solid;border-color:#404040 #d5d4cc #d5d4cc #404040"></div>
<span class="t" style="left:599px;top:276px;color:#8c8a84;transform:scaleX(0.9884);transform-origin:0 0;">Generate event upon change</span>
<svg class="a" style="left:753px;top:246px" width="16" height="14" viewBox="0 0 16 14"><rect x="1.500" y="7.500" width="9" height="6" fill="url(#gLk)" stroke="#767676"/><path d="M7.500,7 V3.500 Q7.500,0.800 10.300,0.800 H11.700 Q14.500,0.800 14.500,3.500 V6" stroke="#8c8c8c" stroke-width="1.200" fill="none"/></svg>
<svg class="a" style="left:777px;top:246px" width="14" height="16" viewBox="0 0 14 16"><g opacity="1"><path d="M0.500,0.500 H13.500 V9.500 L7,15.500 L0.500,9.500 Z" fill="url(#gSh)" stroke="#bcbcbc" stroke-width="1"/><path d="M4.300,8.500 a3,3 0 0 1 4.500,-4 M9.700,6 a3,3 0 0 1 -4.500,4" stroke="#8a8a8a" stroke-width="1.100" fill="none"/><path d="M8,2.800 l2,1.500 l-2,1.500z M6,8.800 l-2,1.500 l2,1.500z" fill="#8a8a8a"/></g></svg>
<svg class="a" style="left:753px;top:271px" width="16" height="15" viewBox="0 0 16 15"><g opacity="1"><path d="M2.500,6.500 V3.500 Q2.500,0.700 6,0.700 Q9.500,0.700 9.500,3.500 V6.500" stroke="#8c8c8c" stroke-width="1.300" fill="none"/><rect x="1.500" y="6.500" width="8.500" height="7" fill="url(#gLk)" stroke="#767676"/><path d="M8.500,9.500 V7.800 Q8.500,5.600 10.800,5.600 Q13.200,5.600 13.200,7.800 V9.500" stroke="#8c8c8c" stroke-width="1.200" fill="#f4f4f4"/><rect x="7.500" y="9.500" width="6.500" height="4.500" fill="url(#gLk)" stroke="#767676"/></g></svg>
<svg class="a" style="left:777px;top:270px" width="14" height="16" viewBox="0 0 14 16"><g opacity="1"><path d="M0.500,0.500 H13.500 V9.500 L7,15.500 L0.500,9.500 Z" fill="url(#gSh)" stroke="#bcbcbc" stroke-width="1"/><path d="M5.800,3.500 v5 M8.200,3.500 v5" stroke="#9a9a9a" stroke-width="1"/><path d="M7,7.500 v5" stroke="#8a8a8a" stroke-width="1.600"/></g></svg>
<span class="t" style="left:832px;top:247.5px;transform:scaleX(0.9701);transform-origin:0 0;">Value deadband:</span>
<div class="a" style="left:934px;top:243px;width:79px;height:20px;background:#fff;border:1px solid;border-color:#808080 #fff #fff #808080"></div>
<div class="a" style="left:935px;top:244px;width:77px;height:18px;border:1px solid;border-color:#404040 #d5d4cc #d5d4cc #404040"></div>
<span class="t" style="left:937px;top:247px;color:#8c8a84;transform:scaleX(0.8490);transform-origin:0 0;">0,0</span>
<span class="t" style="left:832px;top:270px;transform:scaleX(0.9759);transform-origin:0 0;">Engineering units:</span>
<div class="a" style="left:934px;top:266px;width:79px;height:20px;background:#fff;border:1px solid;border-color:#808080 #fff #fff #808080"></div>
<div class="a" style="left:935px;top:267px;width:77px;height:18px;border:1px solid;border-color:#404040 #d5d4cc #d5d4cc #404040"></div>
<span class="t" style="left:937px;top:270px;color:#000;transform:scaleX(0.7934);transform-origin:0 0;">м</span>
<svg class="a" style="left:1025px;top:247px" width="16" height="15" viewBox="0 0 16 15"><g opacity="1"><path d="M2.500,6.500 V3.500 Q2.500,0.700 6,0.700 Q9.500,0.700 9.500,3.500 V6.500" stroke="#8c8c8c" stroke-width="1.300" fill="none"/><rect x="1.500" y="6.500" width="8.500" height="7" fill="url(#gLk)" stroke="#767676"/><path d="M8.500,9.500 V7.800 Q8.500,5.600 10.800,5.600 Q13.200,5.600 13.200,7.800 V9.500" stroke="#8c8c8c" stroke-width="1.200" fill="#f4f4f4"/><rect x="7.500" y="9.500" width="6.500" height="4.500" fill="url(#gLk)" stroke="#767676"/></g></svg>
<svg class="a" style="left:1048px;top:246px" width="14" height="16" viewBox="0 0 14 16"><g opacity="1"><path d="M0.500,0.500 H13.500 V9.500 L7,15.500 L0.500,9.500 Z" fill="url(#gSh)" stroke="#bcbcbc" stroke-width="1"/><path d="M4,7 l2.300,2.500 l4,-5" stroke="#9c9c9c" stroke-width="1.600" fill="none"/></g></svg>
<svg class="a" style="left:1026px;top:270px" width="16" height="14" viewBox="0 0 16 14"><rect x="1.500" y="7.500" width="9" height="6" fill="url(#gLk)" stroke="#767676"/><path d="M7.500,7 V3.500 Q7.500,0.800 10.300,0.800 H11.700 Q14.500,0.800 14.500,3.500 V6" stroke="#8c8c8c" stroke-width="1.200" fill="none"/></svg>
<div class="a" style="left:574px;top:301px;width:495px;height:80px;border:1px solid #a8a6a0;box-shadow:inset 0 0 0 0 #fff"></div>
<div class="a" style="left:581px;top:295px;width:22px;height:13px;background:#fff"></div>
<span class="t" style="left:583.5px;top:295px;">I/O</span>
<div class="a" style="left:620px;top:294px;width:42px;height:14px;background:#fff"></div>
<svg class="a" style="left:622px;top:296px" width="16" height="15" viewBox="0 0 16 15"><g opacity="1"><path d="M2.500,6.500 V3.500 Q2.500,0.700 6,0.700 Q9.500,0.700 9.500,3.500 V6.500" stroke="#8c8c8c" stroke-width="1.300" fill="none"/><rect x="1.500" y="6.500" width="8.500" height="7" fill="url(#gLk)" stroke="#767676"/><path d="M8.500,9.500 V7.800 Q8.500,5.600 10.800,5.600 Q13.200,5.600 13.200,7.800 V9.500" stroke="#8c8c8c" stroke-width="1.200" fill="#f4f4f4"/><rect x="7.500" y="9.500" width="6.500" height="4.500" fill="url(#gLk)" stroke="#767676"/></g></svg>
<svg class="a" style="left:644px;top:295px" width="14" height="16" viewBox="0 0 14 16"><g opacity="1"><path d="M0.500,0.500 H13.500 V9.500 L7,15.500 L0.500,9.500 Z" fill="url(#gSh)" stroke="#bcbcbc" stroke-width="1"/><path d="M7,1 H13 V9.300 L7,15 Z" fill="#c4c4c4" opacity=".75"/></g></svg>
<span class="t" style="left:583px;top:312px;letter-spacing:0.11px;">Input source:</span>
<div class="a" style="left:695px;top:310px;width:291px;height:20px;background:#fff;border:1px solid;border-color:#808080 #fff #fff #808080"></div>
<div class="a" style="left:696px;top:311px;width:289px;height:18px;border:1px solid;border-color:#404040 #d5d4cc #d5d4cc #404040"></div>
<span class="t" style="left:698px;top:314px;color:#000;transform:scaleX(0.9539);transform-origin:0 0;">FS.NPSK_Archestra.AI_Sens_0.Value</span>
<div class="a btn3d" style="left:988px;top:310px;width:24px;height:20px"></div>
<span class="t" style="left:995px;top:313px;transform:scaleX(0.9796);transform-origin:0 0;">...</span>
<svg class="a" style="left:1026px;top:313px" width="16" height="14" viewBox="0 0 16 14"><rect x="1.500" y="7.500" width="9" height="6" fill="url(#gLk)" stroke="#767676"/><path d="M7.500,7 V3.500 Q7.500,0.800 10.300,0.800 H11.700 Q14.500,0.800 14.500,3.500 V6" stroke="#8c8c8c" stroke-width="1.200" fill="none"/></svg>
<svg class="a" style="left:1048px;top:312px" width="14" height="16" viewBox="0 0 14 16"><g opacity="1"><path d="M0.500,0.500 H13.500 V9.500 L7,15.500 L0.500,9.500 Z" fill="url(#gSh)" stroke="#bcbcbc" stroke-width="1"/><path d="M7,1 H13 V9.300 L7,15 Z" fill="#c8c8c8" opacity=".6"/><path d="M7,3.500 v5.500" stroke="#6c6c6c" stroke-width="1.800"/></g></svg>
<div class="a" style="left:582px;top:335px;width:13px;height:13px;background:#d5d4cc;border:1px solid;border-color:#808080 #fff #fff #808080"></div>
<div class="a" style="left:583px;top:336px;width:11px;height:11px;border:1px solid;border-color:#404040 #d5d4cc #d5d4cc #404040"></div>
<span class="t" style="left:599px;top:336px;color:#8c8a84;letter-spacing:0.04px;">Output destination differs from input source</span>
<svg class="a" style="left:1026px;top:337px" width="16" height="14" viewBox="0 0 16 14"><rect x="1.500" y="7.500" width="9" height="6" fill="url(#gLk)" stroke="#767676"/><path d="M7.500,7 V3.500 Q7.500,0.800 10.300,0.800 H11.700 Q14.500,0.800 14.500,3.500 V6" stroke="#8c8c8c" stroke-width="1.200" fill="none"/></svg>
<span class="t" style="left:583px;top:354px;color:#6c6a64;letter-spacing:0.09px;">Output destination:</span>
<div class="a" style="left:695px;top:354px;width:291px;height:20px;background:#fff;border:1px solid;border-color:#808080 #fff #fff #808080"></div>
<div class="a" style="left:696px;top:355px;width:289px;height:18px;border:1px solid;border-color:#404040 #d5d4cc #d5d4cc #404040"></div>
<div class="a btn3d" style="left:988px;top:354px;width:24px;height:20px"></div>
<span class="t" style="left:995px;top:357px;color:#8c8a84;transform:scaleX(0.9796);transform-origin:0 0;">...</span>
<svg class="a" style="left:1025px;top:358px" width="16" height="15" viewBox="0 0 16 15"><g opacity="0.5"><path d="M2.500,6.500 V3.500 Q2.500,0.700 6,0.700 Q9.500,0.700 9.500,3.500 V6.500" stroke="#8c8c8c" stroke-width="1.300" fill="none"/><rect x="1.500" y="6.500" width="8.500" height="7" fill="url(#gLk)" stroke="#767676"/><path d="M8.500,9.500 V7.800 Q8.500,5.600 10.800,5.600 Q13.200,5.600 13.200,7.800 V9.500" stroke="#8c8c8c" stroke-width="1.200" fill="#f4f4f4"/><rect x="7.500" y="9.500" width="6.500" height="4.500" fill="url(#gLk)" stroke="#767676"/></g></svg>
<svg class="a" style="left:1048px;top:358px" width="14" height="16" viewBox="0 0 14 16"><g opacity="0.6"><path d="M0.500,0.500 H13.500 V9.500 L7,15.500 L0.500,9.500 Z" fill="url(#gSh)" stroke="#bcbcbc" stroke-width="1"/><path d="M7,1 H13 V9.300 L7,15 Z" fill="#c4c4c4" opacity=".75"/></g></svg>
<div class="a" style="left:566px;top:387px;width:513px;height:24px;background:#d5d4cc"></div>
<div class="a" style="left:574px;top:391px;width:13px;height:13px;background:#fff;border:1px solid;border-color:#808080 #fff #fff #808080"></div>
<div class="a" style="left:575px;top:392px;width:11px;height:11px;border:1px solid;border-color:#404040 #d5d4cc #d5d4cc #404040"></div>
<span class="t" style="left:591.5px;top:390px;color:#000;transform:scaleX(0.9626);transform-origin:0 0;">Enable I/O scaling</span>
<svg class="a" style="left:1032px;top:391px" width="14" height="14" viewBox="0 0 14 14"><circle cx="7" cy="7" r="6.500" fill="#fff" stroke="#bcbab4" stroke-width="1"/><path d="M4.500,4 l2.500,2.500 l2.500,-2.500 M4.500,7.500 l2.500,2.500 l2.500,-2.500" stroke="#000" stroke-width="1.300" fill="none"/></svg>
<div class="a" style="left:566px;top:415px;width:513px;height:167px;background:#d5d4cc"></div>
<div class="a" style="left:574px;top:418px;width:13px;height:13px;background:#d5d4cc;border:1px solid;border-color:#808080 #fff #fff #808080"></div>
<div class="a" style="left:575px;top:419px;width:11px;height:11px;border:1px solid;border-color:#404040 #d5d4cc #d5d4cc #404040"></div>
<svg class="a" style="left:577px;top:421px" width="7" height="7" viewBox="0 0 7 7"><path d="M0.500,2.500 l2,2 l4,-4 M0.500,3.500 l2,2 l4,-4 M0.500,4.500 l2,2 l4,-4" stroke="#808080" stroke-width="1" fill="none"/></svg>
<span class="t" style="left:591.5px;top:419px;color:#8c8a84;transform:scaleX(0.9749);transform-origin:0 0;">Enable history</span>
<svg class="a" style="left:1032px;top:419px" width="14" height="14" viewBox="0 0 14 14"><circle cx="7" cy="7" r="6.500" fill="#fff" stroke="#bcbab4" stroke-width="1"/><path d="M4.500,6.500 l2.500,-2.500 l2.500,2.500 M4.500,10 l2.500,-2.500 l2.500,2.500" stroke="#000" stroke-width="1.300" fill="none"/></svg>
<div class="a" style="left:566px;top:586px;width:513px;height:24px;background:#d5d4cc"></div>
<div class="a" style="left:574px;top:589px;width:13px;height:13px;background:#fff;border:1px solid;border-color:#808080 #fff #fff #808080"></div>
<div class="a" style="left:575px;top:590px;width:11px;height:11px;border:1px solid;border-color:#404040 #d5d4cc #d5d4cc #404040"></div>
<span class="t" style="left:591.5px;top:590px;color:#000;transform:scaleX(0.9361);transform-origin:0 0;">Enable limit alarms</span>
<svg class="a" style="left:1032px;top:590px" width="14" height="14" viewBox="0 0 14 14"><circle cx="7" cy="7" r="6.500" fill="#fff" stroke="#bcbab4" stroke-width="1"/><path d="M4.500,4 l2.500,2.500 l2.500,-2.500 M4.500,7.500 l2.500,2.500 l2.500,-2.500" stroke="#000" stroke-width="1.300" fill="none"/></svg>
<div class="a" style="left:566px;top:615px;width:513px;height:24px;background:#d5d4cc"></div>
<div class="a" style="left:574px;top:618px;width:13px;height:13px;background:#fff;border:1px solid;border-color:#808080 #fff #fff #808080"></div>
<div class="a" style="left:575px;top:619px;width:11px;height:11px;border:1px solid;border-color:#404040 #d5d4cc #d5d4cc #404040"></div>
<span class="t" style="left:591.5px;top:619px;color:#000;transform:scaleX(0.9735);transform-origin:0 0;">Enable rate of change alarms</span>
<svg class="a" style="left:1032px;top:619px" width="14" height="14" viewBox="0 0 14 14"><circle cx="7" cy="7" r="6.500" fill="#fff" stroke="#bcbab4" stroke-width="1"/><path d="M4.500,4 l2.500,2.500 l2.500,-2.500 M4.500,7.500 l2.500,2.500 l2.500,-2.500" stroke="#000" stroke-width="1.300" fill="none"/></svg>
<div class="a" style="left:566px;top:643px;width:513px;height:21px;background:#d5d4cc"></div>
<div class="a" style="left:574px;top:646px;width:13px;height:13px;background:#fff;border:1px solid;border-color:#808080 #fff #fff #808080"></div>
<div class="a" style="left:575px;top:647px;width:11px;height:11px;border:1px solid;border-color:#404040 #d5d4cc #d5d4cc #404040"></div>
<span class="t" style="left:591.5px;top:647px;color:#000;transform:scaleX(0.9819);transform-origin:0 0;">Enable target deviation alarms</span>
<svg class="a" style="left:1032px;top:647px" width="14" height="14" viewBox="0 0 14 14"><circle cx="7" cy="7" r="6.500" fill="#fff" stroke="#bcbab4" stroke-width="1"/><path d="M4.500,4 l2.500,2.500 l2.500,-2.500 M4.500,7.500 l2.500,2.500 l2.500,-2.500" stroke="#000" stroke-width="1.300" fill="none"/></svg>
<div class="a" style="left:570px;top:439px;width:505px;height:139px;background:#fff"></div>
<div class="a" style="left:574px;top:445px;width:495px;height:128px;border:1px solid #a8a6a0;box-shadow:inset 0 0 0 0 #fff"></div>
<div class="a" style="left:581px;top:439px;width:39px;height:13px;background:#fff"></div>
<span class="t" style="left:583.5px;top:440px;">History</span>
<div class="a" style="left:637px;top:441px;width:42px;height:14px;background:#fff"></div>
<svg class="a" style="left:640px;top:442px" width="16" height="15" viewBox="0 0 16 15"><g opacity="1"><path d="M2.500,6.500 V3.500 Q2.500,0.700 6,0.700 Q9.500,0.700 9.500,3.500 V6.500" stroke="#8c8c8c" stroke-width="1.300" fill="none"/><rect x="1.500" y="6.500" width="8.500" height="7" fill="url(#gLk)" stroke="#767676"/><path d="M8.500,9.500 V7.800 Q8.500,5.600 10.800,5.600 Q13.200,5.600 13.200,7.800 V9.500" stroke="#8c8c8c" stroke-width="1.200" fill="#f4f4f4"/><rect x="7.500" y="9.500" width="6.500" height="4.500" fill="url(#gLk)" stroke="#767676"/></g></svg>
<svg class="a" style="left:661px;top:441px" width="14" height="16" viewBox="0 0 14 16"><g opacity="1"><path d="M0.500,0.500 H13.500 V9.500 L7,15.500 L0.500,9.500 Z" fill="url(#gSh)" stroke="#bcbcbc" stroke-width="1"/><path d="M7,1 H13 V9.300 L7,15 Z" fill="#c4c4c4" opacity=".75"/></g></svg>
<span class="t" style="left:583px;top:460px;transform:scaleX(0.9940);transform-origin:0 0;">Force storage period:</span>
<div class="a" style="left:695px;top:453px;width:86px;height:20px;background:#fff;border:1px solid;border-color:#808080 #fff #fff #808080"></div>
<div class="a" style="left:696px;top:454px;width:84px;height:18px;border:1px solid;border-color:#404040 #d5d4cc #d5d4cc #404040"></div>
<span class="t" style="left:698px;top:457px;color:#8c8a84;">0</span>
<svg class="a" style="left:794px;top:458px" width="16" height="15" viewBox="0 0 16 15"><g opacity="1"><path d="M2.500,6.500 V3.500 Q2.500,0.700 6,0.700 Q9.500,0.700 9.500,3.500 V6.500" stroke="#8c8c8c" stroke-width="1.300" fill="none"/><rect x="1.500" y="6.500" width="8.500" height="7" fill="url(#gLk)" stroke="#767676"/><path d="M8.500,9.500 V7.800 Q8.500,5.600 10.800,5.600 Q13.200,5.600 13.200,7.800 V9.500" stroke="#8c8c8c" stroke-width="1.200" fill="#f4f4f4"/><rect x="7.500" y="9.500" width="6.500" height="4.500" fill="url(#gLk)" stroke="#767676"/></g></svg>
<svg class="a" style="left:814px;top:457px" width="14" height="16" viewBox="0 0 14 16"><g opacity="1"><path d="M0.500,0.500 H13.500 V9.500 L7,15.500 L0.500,9.500 Z" fill="url(#gSh)" stroke="#bcbcbc" stroke-width="1"/><path d="M4,7 l2.300,2.500 l4,-5" stroke="#9c9c9c" stroke-width="1.600" fill="none"/></g></svg>
<span class="t" style="left:840px;top:460px;transform:scaleX(0.9587);transform-origin:0 0;">Trend high:</span>
<div class="a" style="left:934px;top:453px;width:87px;height:20px;background:#fff;border:1px solid;border-color:#808080 #fff #fff #808080"></div>
<div class="a" style="left:935px;top:454px;width:85px;height:18px;border:1px solid;border-color:#404040 #d5d4cc #d5d4cc #404040"></div>
<span class="t" style="left:937px;top:457px;color:#000;transform:scaleX(0.9796);transform-origin:0 0;">20,0</span>
<svg class="a" style="left:1026px;top:458px" width="16" height="14" viewBox="0 0 16 14"><rect x="1.500" y="7.500" width="9" height="6" fill="url(#gLk)" stroke="#767676"/><path d="M7.500,7 V3.500 Q7.500,0.800 10.300,0.800 H11.700 Q14.500,0.800 14.500,3.500 V6" stroke="#8c8c8c" stroke-width="1.200" fill="none"/></svg>
<svg class="a" style="left:1048px;top:457px" width="14" height="16" viewBox="0 0 14 16"><g opacity="1"><path d="M0.500,0.500 H13.500 V9.500 L7,15.500 L0.500,9.500 Z" fill="url(#gSh)" stroke="#bcbcbc" stroke-width="1"/><path d="M7,1 H13 V9.300 L7,15 Z" fill="#c8c8c8" opacity=".6"/><path d="M7,3.500 v5.500" stroke="#6c6c6c" stroke-width="1.800"/></g></svg>
<span class="t" style="left:583px;top:480.5px;transform:scaleX(0.9701);transform-origin:0 0;">Value deadband:</span>
<div class="a" style="left:695px;top:474px;width:86px;height:20px;background:#fff;border:1px solid;border-color:#808080 #fff #fff #808080"></div>
<div class="a" style="left:696px;top:475px;width:84px;height:18px;border:1px solid;border-color:#404040 #d5d4cc #d5d4cc #404040"></div>
<span class="t" style="left:698px;top:478px;color:#8c8a84;transform:scaleX(0.8490);transform-origin:0 0;">0,0</span>
<svg class="a" style="left:794px;top:482px" width="16" height="15" viewBox="0 0 16 15"><g opacity="1"><path d="M2.500,6.500 V3.500 Q2.500,0.700 6,0.700 Q9.500,0.700 9.500,3.500 V6.500" stroke="#8c8c8c" stroke-width="1.300" fill="none"/><rect x="1.500" y="6.500" width="8.500" height="7" fill="url(#gLk)" stroke="#767676"/><path d="M8.500,9.500 V7.800 Q8.500,5.600 10.800,5.600 Q13.200,5.600 13.200,7.800 V9.500" stroke="#8c8c8c" stroke-width="1.200" fill="#f4f4f4"/><rect x="7.500" y="9.500" width="6.500" height="4.500" fill="url(#gLk)" stroke="#767676"/></g></svg>
<svg class="a" style="left:814px;top:481px" width="14" height="16" viewBox="0 0 14 16"><g opacity="1"><path d="M0.500,0.500 H13.500 V9.500 L7,15.500 L0.500,9.500 Z" fill="url(#gSh)" stroke="#bcbcbc" stroke-width="1"/><path d="M4,7 l2.300,2.500 l4,-5" stroke="#9c9c9c" stroke-width="1.600" fill="none"/></g></svg>
<span class="t" style="left:840px;top:480.5px;transform:scaleX(0.9614);transform-origin:0 0;">Trend low:</span>
<div class="a" style="left:934px;top:474px;width:87px;height:20px;background:#fff;border:1px solid;border-color:#808080 #fff #fff #808080"></div>
<div class="a" style="left:935px;top:475px;width:85px;height:18px;border:1px solid;border-color:#404040 #d5d4cc #d5d4cc #404040"></div>
<span class="t" style="left:937px;top:478px;color:#000;transform:scaleX(0.9796);transform-origin:0 0;">0,0</span>
<svg class="a" style="left:1026px;top:482px" width="16" height="14" viewBox="0 0 16 14"><rect x="1.500" y="7.500" width="9" height="6" fill="url(#gLk)" stroke="#767676"/><path d="M7.500,7 V3.500 Q7.500,0.800 10.300,0.800 H11.700 Q14.500,0.800 14.500,3.500 V6" stroke="#8c8c8c" stroke-width="1.200" fill="none"/></svg>
<svg class="a" style="left:1048px;top:481px" width="14" height="16" viewBox="0 0 14 16"><g opacity="1"><path d="M0.500,0.500 H13.500 V9.500 L7,15.500 L0.500,9.500 Z" fill="url(#gSh)" stroke="#bcbcbc" stroke-width="1"/><path d="M7,1 H13 V9.300 L7,15 Z" fill="#c8c8c8" opacity=".6"/><path d="M7,3.500 v5.500" stroke="#6c6c6c" stroke-width="1.800"/></g></svg>
<span class="t" style="left:583px;top:503px;letter-spacing:0.15px;">Interpolation Type:</span>
<div class="a" style="left:695px;top:501px;width:93px;height:20px;background:#fff;border:1px solid;border-color:#808080 #fff #fff #808080"></div>
<div class="a" style="left:696px;top:502px;width:91px;height:18px;border:1px solid;border-color:#404040 #d5d4cc #d5d4cc #404040"></div>
<span class="t" style="left:698px;top:506px;color:#8c8a84;transform:scaleX(0.9642);transform-origin:0 0;">SystemDefault</span>
<div class="a btn3d" style="left:770px;top:503px;width:16px;height:16px"></div>
<svg class="a" style="left:774px;top:509px" width="7" height="4" viewBox="0 0 7 4"><path d="M0,0 h7 l-3.500,4z" fill="#808080"/><path d="M1,1 h7 l-3.500,4z" fill="#fff" opacity=".0"/></svg>
<svg class="a" style="left:794px;top:504px" width="16" height="15" viewBox="0 0 16 15"><g opacity="1"><path d="M2.500,6.500 V3.500 Q2.500,0.700 6,0.700 Q9.500,0.700 9.500,3.500 V6.500" stroke="#8c8c8c" stroke-width="1.300" fill="none"/><rect x="1.500" y="6.500" width="8.500" height="7" fill="url(#gLk)" stroke="#767676"/><path d="M8.500,9.500 V7.800 Q8.500,5.600 10.800,5.600 Q13.200,5.600 13.200,7.800 V9.500" stroke="#8c8c8c" stroke-width="1.200" fill="#f4f4f4"/><rect x="7.500" y="9.500" width="6.500" height="4.500" fill="url(#gLk)" stroke="#767676"/></g></svg>
<svg class="a" style="left:814px;top:503px" width="14" height="16" viewBox="0 0 14 16"><g opacity="1"><path d="M0.500,0.500 H13.500 V9.500 L7,15.500 L0.500,9.500 Z" fill="url(#gSh)" stroke="#bcbcbc" stroke-width="1"/><path d="M4.300,8.500 a3,3 0 0 1 4.500,-4 M9.700,6 a3,3 0 0 1 -4.500,4" stroke="#8a8a8a" stroke-width="1.100" fill="none"/><path d="M8,2.800 l2,1.500 l-2,1.500z M6,8.800 l-2,1.500 l2,1.500z" fill="#8a8a8a"/></g></svg>
<span class="t" style="left:840px;top:503px;transform:scaleX(0.9339);transform-origin:0 0;">Sample Count:</span>
<div class="a" style="left:934px;top:501px;width:63px;height:20px;background:#fff;border:1px solid;border-color:#808080 #fff #fff #808080"></div>
<div class="a" style="left:935px;top:502px;width:61px;height:18px;border:1px solid;border-color:#404040 #d5d4cc #d5d4cc #404040"></div>
<span class="t" style="left:937px;top:505px;color:#8c8a84;">0</span>
<svg class="a" style="left:1025px;top:504px" width="16" height="15" viewBox="0 0 16 15"><g opacity="1"><path d="M2.500,6.500 V3.500 Q2.500,0.700 6,0.700 Q9.500,0.700 9.500,3.500 V6.500" stroke="#8c8c8c" stroke-width="1.300" fill="none"/><rect x="1.500" y="6.500" width="8.500" height="7" fill="url(#gLk)" stroke="#767676"/><path d="M8.500,9.500 V7.800 Q8.500,5.600 10.800,5.600 Q13.200,5.600 13.200,7.800 V9.500" stroke="#8c8c8c" stroke-width="1.200" fill="#f4f4f4"/><rect x="7.500" y="9.500" width="6.500" height="4.500" fill="url(#gLk)" stroke="#767676"/></g></svg>
<svg class="a" style="left:1048px;top:503px" width="14" height="16" viewBox="0 0 14 16"><g opacity="1"><path d="M0.500,0.500 H13.500 V9.500 L7,15.500 L0.500,9.500 Z" fill="url(#gSh)" stroke="#bcbcbc" stroke-width="1"/><path d="M4.300,8.500 a3,3 0 0 1 4.500,-4 M9.700,6 a3,3 0 0 1 -4.500,4" stroke="#8a8a8a" stroke-width="1.100" fill="none"/><path d="M8,2.800 l2,1.500 l-2,1.500z M6,8.800 l-2,1.500 l2,1.500z" fill="#8a8a8a"/></g></svg>
<span class="t" style="left:583px;top:528px;transform:scaleX(0.9619);transform-origin:0 0;">Rollover Value:</span>
<div class="a" style="left:695px;top:525px;width:62px;height:20px;background:#fff;border:1px solid;border-color:#808080 #fff #fff #808080"></div>
<div class="a" style="left:696px;top:526px;width:60px;height:18px;border:1px solid;border-color:#404040 #d5d4cc #d5d4cc #404040"></div>
<span class="t" style="left:698px;top:529px;color:#8c8a84;transform:scaleX(0.8490);transform-origin:0 0;">0,0</span>
<svg class="a" style="left:794px;top:528px" width="16" height="15" viewBox="0 0 16 15"><g opacity="1"><path d="M2.500,6.500 V3.500 Q2.500,0.700 6,0.700 Q9.500,0.700 9.500,3.500 V6.500" stroke="#8c8c8c" stroke-width="1.300" fill="none"/><rect x="1.500" y="6.500" width="8.500" height="7" fill="url(#gLk)" stroke="#767676"/><path d="M8.500,9.500 V7.800 Q8.500,5.600 10.800,5.600 Q13.200,5.600 13.200,7.800 V9.500" stroke="#8c8c8c" stroke-width="1.200" fill="#f4f4f4"/><rect x="7.500" y="9.500" width="6.500" height="4.500" fill="url(#gLk)" stroke="#767676"/></g></svg>
<svg class="a" style="left:814px;top:527px" width="14" height="16" viewBox="0 0 14 16"><g opacity="1"><path d="M0.500,0.500 H13.500 V9.500 L7,15.500 L0.500,9.500 Z" fill="url(#gSh)" stroke="#bcbcbc" stroke-width="1"/><path d="M4.300,8.500 a3,3 0 0 1 4.500,-4 M9.700,6 a3,3 0 0 1 -4.500,4" stroke="#8a8a8a" stroke-width="1.100" fill="none"/><path d="M8,2.800 l2,1.500 l-2,1.500z M6,8.800 l-2,1.500 l2,1.500z" fill="#8a8a8a"/></g></svg>
<div class="a" style="left:839px;top:528px;width:13px;height:13px;background:#d5d4cc;border:1px solid;border-color:#808080 #fff #fff #808080"></div>
<div class="a" style="left:840px;top:529px;width:11px;height:11px;border:1px solid;border-color:#404040 #d5d4cc #d5d4cc #404040"></div>
<span class="t" style="left:856px;top:529px;color:#8c8a84;transform:scaleX(0.9366);transform-origin:0 0;">Enable Swinging Door</span>
<svg class="a" style="left:1025px;top:528px" width="16" height="15" viewBox="0 0 16 15"><g opacity="1"><path d="M2.500,6.500 V3.500 Q2.500,0.700 6,0.700 Q9.500,0.700 9.500,3.500 V6.500" stroke="#8c8c8c" stroke-width="1.300" fill="none"/><rect x="1.500" y="6.500" width="8.500" height="7" fill="url(#gLk)" stroke="#767676"/><path d="M8.500,9.500 V7.800 Q8.500,5.600 10.800,5.600 Q13.200,5.600 13.200,7.800 V9.500" stroke="#8c8c8c" stroke-width="1.200" fill="#f4f4f4"/><rect x="7.500" y="9.500" width="6.500" height="4.500" fill="url(#gLk)" stroke="#767676"/></g></svg>
<svg class="a" style="left:1048px;top:527px" width="14" height="16" viewBox="0 0 14 16"><g opacity="1"><path d="M0.500,0.500 H13.500 V9.500 L7,15.500 L0.500,9.500 Z" fill="url(#gSh)" stroke="#bcbcbc" stroke-width="1"/><path d="M4.300,8.500 a3,3 0 0 1 4.500,-4 M9.700,6 a3,3 0 0 1 -4.500,4" stroke="#8a8a8a" stroke-width="1.100" fill="none"/><path d="M8,2.800 l2,1.500 l-2,1.500z M6,8.800 l-2,1.500 l2,1.500z" fill="#8a8a8a"/></g></svg>
<span class="t" style="left:840px;top:551px;color:#6c6a64;transform:scaleX(0.9459);transform-origin:0 0;">Rate DeadBand:</span>
<div class="a" style="left:934px;top:549px;width:63px;height:20px;background:#fff;border:1px solid;border-color:#808080 #fff #fff #808080"></div>
<div class="a" style="left:935px;top:550px;width:61px;height:18px;border:1px solid;border-color:#404040 #d5d4cc #d5d4cc #404040"></div>
<span class="t" style="left:937px;top:553px;color:#8c8a84;transform:scaleX(0.8490);transform-origin:0 0;">0,0</span>
<span class="t" style="left:1004px;top:551px;transform:scaleX(0.9201);transform-origin:0 0;">%</span>
<svg class="a" style="left:1026px;top:551px" width="16" height="14" viewBox="0 0 16 14"><rect x="1.500" y="7.500" width="9" height="6" fill="url(#gLk)" stroke="#767676"/><path d="M7.500,7 V3.500 Q7.500,0.800 10.300,0.800 H11.700 Q14.500,0.800 14.500,3.500 V6" stroke="#8c8c8c" stroke-width="1.200" fill="none"/></svg>
<svg class="a" style="left:1048px;top:550px" width="14" height="16" viewBox="0 0 14 16"><g opacity="1"><path d="M0.500,0.500 H13.500 V9.500 L7,15.500 L0.500,9.500 Z" fill="url(#gSh)" stroke="#bcbcbc" stroke-width="1"/><path d="M4.300,8.500 a3,3 0 0 1 4.500,-4 M9.700,6 a3,3 0 0 1 -4.500,4" stroke="#8a8a8a" stroke-width="1.100" fill="none"/><path d="M8,2.800 l2,1.500 l-2,1.500z M6,8.800 l-2,1.500 l2,1.500z" fill="#8a8a8a"/></g></svg>
<div class="a" style="left:315px;top:661px;width:764px;height:3px;background:#d5d4cc"></div>
<div class="a" style="left:314px;top:664px;width:765px;height:1px;background:#404040"></div>
<div class="a" style="left:311px;top:665px;width:768px;height:2px;background:#e6e4de"></div>
<div class="a" style="left:311px;top:667px;width:768px;height:23px;background:#d5d4cc"></div>
<div class="a" style="left:312px;top:667px;width:43px;height:1px;background:#000"></div>
<div class="a" style="left:482px;top:667px;width:597px;height:1px;background:#000"></div>
<div class="a" style="left:316px;top:668px;width:39px;height:19px;background:#e9e7e3"></div>
<svg class="a" style="left:319px;top:670px" width="15" height="15" viewBox="0 0 15 15"><rect x="0.500" y="0.500" width="13.500" height="13.500" fill="#1c1c70"/><rect x="1.200" y="1.200" width="9" height="12" fill="url(#gIcoB)"/><rect x="10.700" y="1.200" width="2.300" height="12" fill="url(#gIcoR)"/><path d="M0.500,14.500 h14 v-13.500" stroke="#6a6a9a" stroke-width=".8" fill="none" opacity=".7"/><path d="M3,5 q0,-2.500 3,-2.500 q3,0 3,2.500 v5 q0,1.500 -3,1.500 q-3,0 -3,-1.500z" fill="#fff"/><rect x="2.800" y="4.500" width="1.300" height="6" fill="#7a30d8"/><rect x="4.600" y="5" width="2" height="6" fill="#5a1890"/><path d="M6.500,6 l2.500,4.500" stroke="#202020" stroke-width="1"/><path d="M3.500,3.500 q2.500,-1.500 5,0" stroke="#303030" stroke-width=".8" fill="none" stroke-dasharray="1.200 .8"/></svg>
<span class="t" style="left:336.5px;top:671px;transform:scaleX(0.8533);transform-origin:0 0;">FS</span>
<div class="a" style="left:355px;top:667px;width:127px;height:20px;background:#d9d8e1;border-right:1px solid #000;border-bottom:1px solid #000"></div>
<svg class="a" style="left:358px;top:672px" width="11" height="11" viewBox="0 0 11 11"><circle cx="5.5" cy="5.5" r="5.3" fill="url(#gBlue)"/></svg>
<span class="t" style="left:377px;top:671px;transform:scaleX(0.9111);transform-origin:0 0;">NPSK_RSU_AI_0079</span>
<div class="a" style="left:311px;top:690px;width:768px;height:1px;background:#0a246a"></div>
<div class="a" style="left:311px;top:691px;width:768px;height:3px;background:#fff"></div>
<div class="a" style="left:311px;top:694px;width:768px;height:1px;background:#0a246a"></div>
<div class="a" style="left:311px;top:695px;width:768px;height:27px;background:linear-gradient(180deg,#f8f8f6 0,#efefed 40%,#e2dfdc 100%);"></div>
<div class="a" style="left:315px;top:700px;width:2px;height:2px;background:#fff"></div>
<div class="a" style="left:314px;top:699px;width:2px;height:2px;background:#a29f97"></div>
<div class="a" style="left:315px;top:704px;width:2px;height:2px;background:#fff"></div>
<div class="a" style="left:314px;top:703px;width:2px;height:2px;background:#a29f97"></div>
<div class="a" style="left:315px;top:708px;width:2px;height:2px;background:#fff"></div>
<div class="a" style="left:314px;top:707px;width:2px;height:2px;background:#a29f97"></div>
<div class="a" style="left:315px;top:712px;width:2px;height:2px;background:#fff"></div>
<div class="a" style="left:314px;top:711px;width:2px;height:2px;background:#a29f97"></div>
<div class="a" style="left:315px;top:716px;width:2px;height:2px;background:#fff"></div>
<div class="a" style="left:314px;top:715px;width:2px;height:2px;background:#a29f97"></div>
<svg class="a" style="left:320px;top:700px" width="16" height="16" viewBox="0 0 16 16"><circle cx="8" cy="8" r="7.600" fill="#dce8fa" stroke="#a8c0e8" stroke-width=".8"/><circle cx="8" cy="8" r="6.3" fill="url(#gBlue)"/><path d="M2.500,9 h1.500 l1.500,-4 l1.800,7 l1.800,-8 l1.500,6 l1.200,-2.500 h2" stroke="#fff" stroke-width="1.200" fill="none"/></svg>
<span class="t" style="left:337.5px;top:700px;font-size:13px;line-height:15px;font-weight:bold;transform:scaleX(0.9617);transform-origin:0 0;">Operations</span>
<div class="a" style="left:311px;top:722px;width:768px;height:222px;background:#fff"></div>
<div class="a" style="left:311px;top:724px;width:768px;height:1px;background:#808080"></div>
<div class="a" style="left:312px;top:725px;width:767px;height:1px;background:#404040"></div>
<div class="a" style="left:313px;top:726px;width:766px;height:17px;background:#d5d4cc;border-top:1px solid #fff;border-bottom:1px solid #404040"></div>
<div class="a" style="left:313px;top:741px;width:766px;height:1px;background:#808080"></div>
<div class="a" style="left:311px;top:724px;width:1px;height:220px;background:#808080"></div>
<div class="a" style="left:312px;top:725px;width:1px;height:219px;background:#404040"></div>
<div class="a" style="left:313px;top:726px;width:1px;height:15px;background:#fff"></div>
<div class="a" style="left:333px;top:727px;width:1px;height:15px;background:#808080"></div>
<div class="a" style="left:334px;top:726px;width:1px;height:16px;background:#404040"></div>
<div class="a" style="left:335px;top:726px;width:1px;height:15px;background:#fff"></div>
<div class="a" style="left:534px;top:727px;width:1px;height:15px;background:#808080"></div>
<div class="a" style="left:535px;top:726px;width:1px;height:16px;background:#404040"></div>
<div class="a" style="left:536px;top:726px;width:1px;height:15px;background:#fff"></div>
<div class="a" style="left:658px;top:727px;width:1px;height:15px;background:#808080"></div>
<div class="a" style="left:659px;top:726px;width:1px;height:16px;background:#404040"></div>
<div class="a" style="left:660px;top:726px;width:1px;height:15px;background:#fff"></div>
<svg class="a" style="left:320px;top:732px" width="7" height="6" viewBox="0 0 7 6"><path d="M0.500,3 l2,2.300 l4,-4.800" stroke="#000" stroke-width="1.500" fill="none"/></svg>
<span class="t" style="left:340px;top:729px;transform:scaleX(0.9201);transform-origin:0 0;">Name</span>
<svg class="a" style="left:380px;top:732px" width="9" height="5" viewBox="0 0 9 5"><path d="M0,5 h9 l-4.500,-5z" fill="#000"/></svg>
<span class="t" style="left:540px;top:729px;transform:scaleX(0.9930);transform-origin:0 0;">Status</span>
<span class="t" style="left:665px;top:729px;transform:scaleX(0.9539);transform-origin:0 0;">Command result</span>
<svg class="a" style="left:342px;top:744px" width="14" height="14" viewBox="0 0 14 14"><path d="M5.87,0.50 L8.13,0.50 L8.17,2.14 L9.61,2.74 L10.80,1.60 L12.40,3.20 L11.26,4.39 L11.86,5.83 L13.50,5.87 L13.50,8.13 L11.86,8.17 L11.26,9.61 L12.40,10.80 L10.80,12.40 L9.61,11.26 L8.17,11.86 L8.13,13.50 L5.87,13.50 L5.83,11.86 L4.39,11.26 L3.20,12.40 L1.60,10.80 L2.74,9.61 L2.14,8.17 L0.50,8.13 L0.50,5.87 L2.14,5.83 L2.74,4.39 L1.60,3.20 L3.20,1.60 L4.39,2.74 L5.83,2.14Z" fill="#fff" stroke="#2222c4" stroke-width="0.85" stroke-linejoin="miter"/><circle cx="7" cy="7" r="2.900" fill="url(#gBlue)"/></svg>
<span class="t" style="left:364px;top:745px;transform:scaleX(0.8851);transform-origin:0 0;">AE</span>
<span class="t" style="left:398px;top:745px;transform:scaleX(0.8662);transform-origin:0 0;">WIS</span>
<svg class="a" style="left:540px;top:745px" width="13" height="13" viewBox="0 0 13 13"><rect x="0.500" y="0.500" width="12" height="12" rx="1" fill="#22b022" stroke="#0c6a0c"/><rect x="1.500" y="1.500" width="10" height="5" fill="#48d048" opacity=".7"/><path d="M3,6.500 l2.500,3 l4.500,-6" stroke="#fff" stroke-width="1.700" fill="none"/></svg>
<svg class="a" style="left:0;top:0" width="1079" height="944" viewBox="0 0 1079 944"><path d="M379,748 L382,746 L386,746.500 L389,744.500 L393,742.500 L396.500,742 L397,745 L395,748 L396,752 L393,755 L389,757 L384,758 L380,756.500 L378.500,752 Z" fill="#000" stroke="#000" stroke-width="1.2" stroke-linejoin="round"/></svg>
<span class="t" style="left:565px;top:745px;transform:scaleX(0.8910);transform-origin:0 0;">Good</span>
<span class="t" style="left:665px;top:745px;transform:scaleX(0.9624);transform-origin:0 0;">Succeeded - Validation completed</span>
</div>
</body></html>
